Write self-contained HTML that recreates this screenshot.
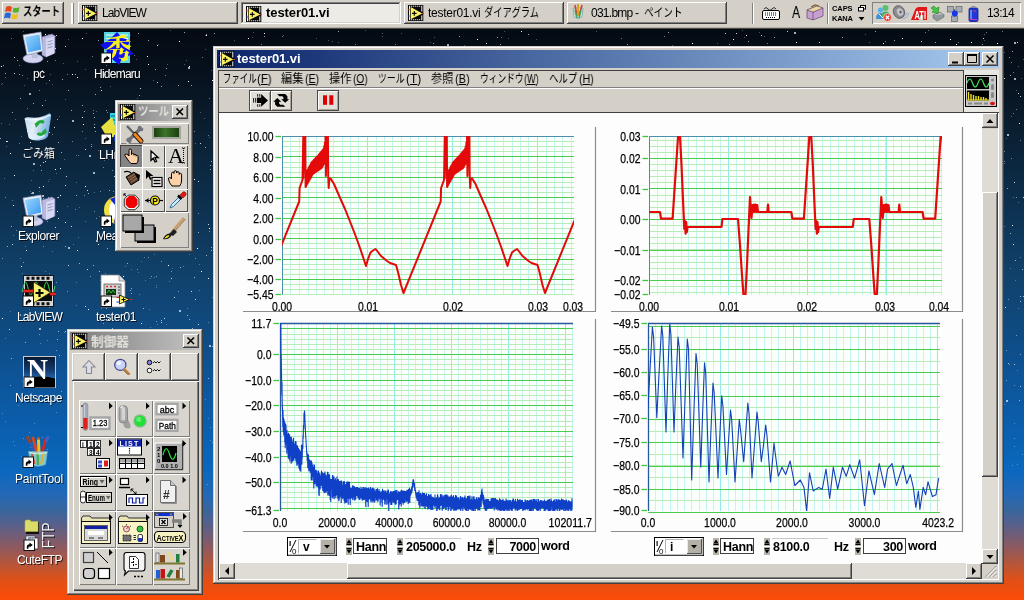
<!DOCTYPE html>
<html lang="ja"><head><meta charset="utf-8"><title>tester01.vi</title>
<style>
html,body{margin:0;padding:0}
body{width:1024px;height:600px;overflow:hidden;position:relative;font-family:"Liberation Sans","Noto Sans CJK JP",sans-serif;font-size:12px;color:#000;
background:linear-gradient(to bottom,#040a12 0px,#040a12 28px,#07121e 78px,#0a1e30 128px,#0c2a44 178px,#0e3658 228px,#10426c 278px,#0f4a80 328px,#0d5498 378px,#0b5fae 428px,#0a68be 470px,#2468b6 495px,#38669e 510px,#58608a 525px,#885a64 545px,#b85638 565px,#e05018 580px,#f84c08 596px);}
.a{position:absolute}
.t{position:absolute;white-space:nowrap;line-height:1}
.win{position:absolute;background:#d4d0c8;box-shadow:inset -1px -1px #404040,inset 1px 1px #d4d0c8,inset -2px -2px #808080,inset 2px 2px #fff}
.btn{position:absolute;background:#d4d0c8;box-shadow:inset -1px -1px #404040,inset 1px 1px #fff,inset -2px -2px #808080,inset 2px 2px #d4d0c8}
.sunk{position:absolute;box-shadow:inset -1px -1px #fff,inset 1px 1px #808080,inset -2px -2px #d4d0c8,inset 2px 2px #404040}
.lbl{position:absolute;white-space:nowrap;color:#fff;font-size:12px;line-height:12px;text-shadow:1px 1px 0 rgba(0,0,0,.75)}
svg{position:absolute;overflow:visible}
.t,.lbl,svg{will-change:transform}
</style></head><body>
<svg class="a" style="left:0;top:0" width="1024" height="600" shape-rendering="crispEdges"><path d="M34 423h1v1h-1zM205 49h1v1h-1zM68 39h1v1h-1zM25 313h1v1h-1zM984 40h1v1h-1zM23 201h1v1h-1zM64 159h1v1h-1zM22 381h1v1h-1zM10 311h1v1h-1zM1021 78h1v1h-1zM764 36h1v1h-1zM31 180h1v1h-1zM46 83h1v1h-1zM156 285h1v1h-1zM45 132h1v1h-1zM49 273h1v1h-1zM189 254h1v1h-1zM365 30h1v1h-1zM76 282h1v1h-1zM464 45h1v1h-1zM49 179h1v1h-1zM48 181h1v1h-1zM59 116h1v1h-1zM63 63h1v1h-1zM50 377h1v1h-1zM47 449h1v1h-1zM1014 423h1v1h-1zM1013 197h1v1h-1zM212 442h1v1h-1zM1004 404h1v1h-1zM39 155h1v1h-1zM14 445h1v1h-1zM96 111h1v1h-1zM48 34h1v1h-1zM419 39h1v1h-1zM29 432h1v1h-1zM401 33h1v1h-1zM744 37h1v1h-1zM47 340h1v1h-1zM1018 202h1v1h-1zM21 136h1v1h-1zM672 45h1v1h-1zM1004 52h1v1h-1zM30 191h1v1h-1zM5 77h1v1h-1zM65 99h1v1h-1zM170 30h1v1h-1zM30 447h1v1h-1zM28 54h1v1h-1zM1006 138h1v1h-1zM25 275h1v1h-1zM95 70h1v1h-1zM52 84h1v1h-1zM1009 364h1v1h-1zM50 74h1v1h-1zM154 277h1v1h-1zM207 484h1v1h-1zM137 98h1v1h-1zM76 305h1v1h-1zM150 327h1v1h-1zM2 83h1v1h-1zM52 251h1v1h-1zM23 31h1v1h-1zM104 160h1v1h-1zM153 80h1v1h-1zM24 85h1v1h-1zM199 264h1v1h-1zM1012 465h1v1h-1zM205 399h1v1h-1zM1023 59h1v1h-1zM332 41h1v1h-1zM101 308h1v1h-1zM120 50h1v1h-1zM29 309h1v1h-1zM187 308h1v1h-1zM154 254h1v1h-1zM2 413h1v1h-1zM183 266h1v1h-1zM434 37h1v1h-1zM54 149h1v1h-1zM204 118h1v1h-1zM15 119h1v1h-1zM338 42h1v1h-1zM252 37h1v1h-1zM210 427h1v1h-1zM508 38h1v1h-1zM20 258h1v1h-1zM25 385h1v1h-1zM13 441h1v1h-1zM865 34h1v1h-1zM86 33h1v1h-1zM100 280h1v1h-1zM1004 163h1v1h-1zM1011 116h1v1h-1zM79 207h1v1h-1zM984 34h1v1h-1zM1014 438h1v1h-1zM144 257h1v1h-1zM99 216h1v1h-1zM4 178h1v1h-1zM186 60h1v1h-1zM125 266h1v1h-1zM28 436h1v1h-1zM1020 257h1v1h-1zM195 143h1v1h-1zM157 324h1v1h-1zM209 137h1v1h-1zM158 44h1v1h-1zM501 37h1v1h-1zM13 235h1v1h-1zM73 244h1v1h-1zM328 40h1v1h-1zM1015 280h1v1h-1zM167 64h1v1h-1zM1014 385h1v1h-1zM23 438h1v1h-1zM85 138h1v1h-1zM536 39h1v1h-1zM78 237h1v1h-1zM22 273h1v1h-1zM208 418h1v1h-1zM12 200h1v1h-1zM40 343h1v1h-1zM77 61h1v1h-1zM42 437h1v1h-1zM39 191h1v1h-1zM199 290h1v1h-1zM33 476h1v1h-1zM25 246h1v1h-1zM1014 446h1v1h-1zM18 405h1v1h-1zM130 35h1v1h-1zM110 86h1v1h-1zM156 287h1v1h-1zM56 412h1v1h-1zM184 64h1v1h-1zM382 33h1v1h-1zM21 456h1v1h-1zM717 43h1v1h-1zM67 206h1v1h-1zM382 36h1v1h-1zM169 281h1v1h-1zM166 324h1v1h-1zM26 484h1v1h-1zM504 31h1v1h-1zM5 421h1v1h-1zM94 192h1v1h-1zM1 84h1v1h-1zM39 441h1v1h-1zM211 70h1v1h-1zM9 124h1v1h-1zM253 32h1v1h-1zM64 332h1v1h-1zM1016 90h1v1h-1zM210 440h1v1h-1zM108 159h1v1h-1zM234 40h1v1h-1zM149 309h1v1h-1zM869 42h1v1h-1zM1017 370h1v1h-1zM103 55h1v1h-1zM1022 454h1v1h-1zM139 294h1v1h-1zM1004 226h1v1h-1zM136 59h1v1h-1zM1017 464h1v1h-1zM200 112h1v1h-1zM85 221h1v1h-1zM150 278h1v1h-1zM212 297h1v1h-1zM208 322h1v1h-1zM430 42h1v1h-1zM45 213h1v1h-1zM141 261h1v1h-1zM1010 268h1v1h-1zM20 232h1v1h-1zM49 307h1v1h-1zM172 268h1v1h-1zM283 35h1v1h-1zM33 120h1v1h-1zM98 150h1v1h-1zM138 272h1v1h-1zM729 44h1v1h-1zM5 338h1v1h-1zM1018 66h1v1h-1zM76 182h1v1h-1zM76 155h1v1h-1zM145 280h1v1h-1zM45 271h1v1h-1zM205 35h1v1h-1zM759 32h1v1h-1zM28 238h1v1h-1zM105 273h1v1h-1zM27 78h1v1h-1zM6 146h1v1h-1zM33 170h1v1h-1zM85 69h1v1h-1zM123 321h1v1h-1zM1 123h1v1h-1zM596 31h1v1h-1zM742 30h1v1h-1zM33 465h1v1h-1zM35 312h1v1h-1zM1018 308h1v1h-1zM316 38h1v1h-1zM56 173h1v1h-1zM131 269h1v1h-1z" fill="#fff" opacity="0.3"/><path d="M129 57h1v1h-1zM61 391h1v1h-1zM123 51h1v1h-1zM171 271h1v1h-1zM101 137h1v1h-1zM22 75h1v1h-1zM55 36h1v1h-1zM124 34h1v1h-1zM19 65h1v1h-1zM621 38h1v1h-1zM37 151h1v1h-1zM928 30h1v1h-1zM151 276h1v1h-1zM112 170h1v1h-1zM261 44h1v1h-1zM1020 140h1v1h-1zM1008 299h1v1h-1zM94 211h1v1h-1zM198 213h1v1h-1zM93 110h1v1h-1zM148 257h1v1h-1zM47 221h1v1h-1zM106 65h1v1h-1zM56 235h1v1h-1zM30 37h1v1h-1zM36 35h1v1h-1zM72 141h1v1h-1zM23 262h1v1h-1zM55 60h1v1h-1zM22 235h1v1h-1zM2 258h1v1h-1zM1002 31h1v1h-1zM31 236h1v1h-1zM103 167h1v1h-1zM39 90h1v1h-1zM664 36h1v1h-1zM113 191h1v1h-1zM194 131h1v1h-1zM925 32h1v1h-1zM1006 380h1v1h-1zM208 135h1v1h-1zM39 334h1v1h-1zM56 350h1v1h-1zM75 209h1v1h-1zM16 230h1v1h-1zM56 282h1v1h-1zM53 380h1v1h-1zM156 276h1v1h-1zM82 131h1v1h-1zM31 314h1v1h-1zM42 70h1v1h-1zM1020 354h1v1h-1zM1013 113h1v1h-1zM52 134h1v1h-1zM282 36h1v1h-1zM1004 151h1v1h-1zM1016 197h1v1h-1zM134 55h1v1h-1zM137 269h1v1h-1zM78 155h1v1h-1zM209 231h1v1h-1zM1006 350h1v1h-1zM55 400h1v1h-1zM1013 72h1v1h-1zM107 112h1v1h-1zM28 315h1v1h-1zM355 44h1v1h-1zM885 41h1v1h-1zM11 38h1v1h-1zM156 321h1v1h-1zM91 144h1v1h-1zM47 40h1v1h-1zM114 140h1v1h-1zM1004 161h1v1h-1zM67 291h1v1h-1zM395 44h1v1h-1zM161 261h1v1h-1zM90 276h1v1h-1zM178 291h1v1h-1zM45 100h1v1h-1zM209 98h1v1h-1zM1016 335h1v1h-1zM1011 158h1v1h-1zM1011 62h1v1h-1zM1016 109h1v1h-1zM27 108h1v1h-1zM165 75h1v1h-1zM767 43h1v1h-1zM103 323h1v1h-1zM100 191h1v1h-1zM105 44h1v1h-1zM67 74h1v1h-1zM19 143h1v1h-1zM92 56h1v1h-1zM52 152h1v1h-1zM1023 197h1v1h-1zM202 57h1v1h-1zM43 246h1v1h-1zM33 46h1v1h-1zM195 258h1v1h-1zM10 385h1v1h-1zM958 42h1v1h-1zM96 218h1v1h-1zM986 32h1v1h-1zM84 195h1v1h-1zM5 197h1v1h-1zM729 44h1v1h-1z" fill="#fff" opacity="0.45"/><path d="M107 248h1v1h-1zM528 34h1v1h-1zM497 37h1v1h-1zM1023 296h1v1h-1zM71 110h1v1h-1zM894 40h1v1h-1zM198 232h1v1h-1zM36 74h1v1h-1zM206 34h1v1h-1zM748 41h1v1h-1zM130 290h1v1h-1zM33 103h1v1h-1zM627 44h1v1h-1zM131 288h1v1h-1zM210 165h1v1h-1zM1009 57h1v1h-1zM148 40h1v1h-1zM161 320h1v1h-1zM82 105h1v1h-1zM109 190h1v1h-1zM49 380h1v1h-1zM20 98h1v1h-1zM113 128h1v1h-1zM774 37h1v1h-1zM25 342h1v1h-1zM49 80h1v1h-1zM180 267h1v1h-1zM214 33h1v1h-1zM1010 233h1v1h-1zM139 95h1v1h-1zM100 87h1v1h-1zM161 86h1v1h-1zM1020 296h1v1h-1zM1020 301h1v1h-1zM44 157h1v1h-1zM49 280h1v1h-1zM54 373h1v1h-1zM57 339h1v1h-1zM65 331h1v1h-1zM57 197h1v1h-1zM68 90h1v1h-1zM58 142h1v1h-1zM95 94h1v1h-1zM57 119h1v1h-1zM61 152h1v1h-1zM131 293h1v1h-1zM91 146h1v1h-1zM982 44h1v1h-1zM935 42h1v1h-1zM1010 75h1v1h-1zM94 124h1v1h-1zM98 40h1v1h-1zM95 131h1v1h-1zM31 193h1v1h-1zM178 85h1v1h-1zM187 315h1v1h-1zM1012 51h1v1h-1zM88 193h1v1h-1zM189 319h1v1h-1zM1022 269h1v1h-1zM29 197h1v1h-1zM58 331h1v1h-1zM1007 188h1v1h-1zM211 250h1v1h-1zM155 69h1v1h-1zM75 74h1v1h-1zM11 226h1v1h-1zM1019 400h1v1h-1zM127 263h1v1h-1zM106 308h1v1h-1zM459 36h1v1h-1zM433 43h1v1h-1zM692 43h1v1h-1zM35 56h1v1h-1zM668 32h1v1h-1zM191 85h1v1h-1zM59 355h1v1h-1zM206 35h1v1h-1zM194 277h1v1h-1zM35 311h1v1h-1zM875 31h1v1h-1zM102 291h1v1h-1zM842 37h1v1h-1zM205 147h1v1h-1zM93 113h1v1h-1zM166 68h1v1h-1zM93 265h1v1h-1zM40 165h1v1h-1zM112 328h1v1h-1zM1015 260h1v1h-1zM0 138h1v1h-1zM48 197h1v1h-1zM5 73h1v1h-1zM106 110h1v1h-1zM19 74h1v1h-1zM79 263h1v1h-1zM60 168h1v1h-1zM94 117h1v1h-1zM11 358h1v1h-1zM33 133h1v1h-1zM17 60h1v1h-1zM76 195h1v1h-1zM264 36h1v1h-1zM208 378h1v1h-1zM26 235h1v1h-1zM212 346h1v1h-1zM1014 364h1v1h-1zM110 46h1v1h-1zM211 247h1v1h-1zM338 31h1v1h-1zM47 61h1v1h-1zM1008 363h1v1h-1zM40 358h1v1h-1zM65 246h1v1h-1zM3 65h1v1h-1zM206 255h1v1h-1zM7 246h1v1h-1zM12 112h1v1h-1zM102 294h1v1h-1zM44 305h1v1h-1zM111 71h1v1h-1zM138 33h1v1h-1zM211 161h1v1h-1zM43 198h1v1h-1zM38 313h1v1h-1zM106 50h1v1h-1zM192 328h1v1h-1zM210 169h1v1h-1zM99 271h1v1h-1zM41 170h1v1h-1zM1020 386h1v1h-1zM500 44h1v1h-1zM184 32h1v1h-1zM139 71h1v1h-1zM84 111h1v1h-1zM27 212h1v1h-1zM62 79h1v1h-1zM1023 197h1v1h-1zM143 308h1v1h-1z" fill="#fff" opacity="0.6"/><path d="M85 306h1v1h-1zM206 35h1v1h-1zM140 88h1v1h-1zM195 299h1v1h-1zM198 181h1v1h-1zM1020 96h1v1h-1zM787 31h1v1h-1zM7 141h1v1h-1zM87 269h1v1h-1zM117 60h1v1h-1zM58 218h1v1h-1zM66 176h1v1h-1zM114 176h1v1h-1zM208 224h1v1h-1zM49 132h1v1h-1zM198 324h1v1h-1zM114 285h1v1h-1zM1014 182h1v1h-1zM114 300h1v1h-1zM14 57h1v1h-1zM171 278h1v1h-1zM30 142h1v1h-1zM85 149h1v1h-1zM486 43h1v1h-1zM58 197h1v1h-1zM157 45h1v1h-1zM9 329h1v1h-1zM102 228h1v1h-1zM109 211h1v1h-1zM65 185h1v1h-1zM725 33h1v1h-1zM1013 244h1v1h-1zM736 33h1v1h-1zM921 41h1v1h-1zM174 297h1v1h-1zM12 244h1v1h-1zM161 322h1v1h-1zM761 35h1v1h-1zM983 38h1v1h-1zM123 70h1v1h-1zM87 190h1v1h-1zM71 226h1v1h-1zM819 42h1v1h-1zM45 161h1v1h-1zM26 250h1v1h-1zM77 250h1v1h-1zM1005 307h1v1h-1zM35 155h1v1h-1zM60 168h1v1h-1zM39 187h1v1h-1zM164 318h1v1h-1zM43 162h1v1h-1zM54 127h1v1h-1zM191 291h1v1h-1zM68 265h1v1h-1zM56 35h1v1h-1zM141 323h1v1h-1zM42 105h1v1h-1zM157 82h1v1h-1zM14 73h1v1h-1zM55 227h1v1h-1zM1004 78h1v1h-1zM52 35h1v1h-1zM200 143h1v1h-1zM101 90h1v1h-1zM1017 42h1v1h-1zM65 46h1v1h-1zM1018 93h1v1h-1z" fill="#fff" opacity="0.8"/><path d="M212 80h1v1h-1zM148 64h1v1h-1zM13 205h1v1h-1zM1019 123h1v1h-1zM49 47h1v1h-1zM1012 225h1v1h-1zM77 77h1v1h-1zM201 271h1v1h-1zM6 141h1v1h-1zM65 222h1v1h-1zM746 35h1v1h-1zM45 34h1v1h-1zM194 179h1v1h-1zM733 39h1v1h-1zM997 43h1v1h-1zM189 66h1v1h-1zM85 186h1v1h-1zM209 228h1v1h-1zM72 74h1v1h-1zM45 132h1v1h-1zM98 244h1v1h-1zM197 248h1v1h-1zM60 195h1v1h-1zM168 265h1v1h-1zM477 39h1v1h-1zM796 42h1v1h-1zM179 41h1v1h-1zM14 175h1v1h-1zM1 66h1v1h-1zM82 38h1v1h-1zM10 153h1v1h-1zM902 38h1v1h-1zM883 43h1v1h-1zM82 117h1v1h-1zM94 127h1v1h-1zM248 38h1v1h-1zM21 266h1v1h-1zM55 48h1v1h-1zM27 131h1v1h-1zM83 124h1v1h-1zM108 319h1v1h-1zM521 31h1v1h-1zM43 186h1v1h-1zM123 276h1v1h-1zM61 313h1v1h-1zM51 54h1v1h-1zM2 318h1v1h-1zM264 33h1v1h-1zM55 169h1v1h-1zM971 42h1v1h-1zM147 56h1v1h-1zM188 81h1v1h-1zM956 44h1v1h-1zM105 74h1v1h-1zM950 39h1v1h-1zM57 211h1v1h-1zM208 278h1v1h-1zM88 309h1v1h-1zM692 43h1v1h-1z" fill="#fff" opacity="1.0"/><path d="M39 328h2v2h-2zM32 192h2v2h-2zM72 120h2v2h-2zM209 345h2v2h-2zM188 67h2v2h-2zM1007 134h2v2h-2zM42 195h2v2h-2zM794 32h2v2h-2zM1006 400h2v2h-2zM1014 42h2v2h-2zM29 93h2v2h-2zM1014 78h2v2h-2zM447 44h2v2h-2zM93 172h2v2h-2zM89 155h2v2h-2zM179 310h2v2h-2zM68 247h2v2h-2zM33 163h2v2h-2zM96 240h2v2h-2zM19 314h2v2h-2z" fill="#e8f0ff" opacity="0.700"/></svg>
<svg class="a" style="left:22px;top:32px" width="34" height="32" viewBox="0 0 34 32"><defs><linearGradient id="scr54" x1="0" y1="0" x2="1" y2="1"><stop offset="0" stop-color="#98d8ff"/><stop offset="1" stop-color="#3c98f0"/></linearGradient></defs><path d="M20 5l10-3 3 2v17l-9 4-4-2z" fill="#b8b8e0" stroke="#8080b0" stroke-width="0.6"/><path d="M24 7l8-2.5v17L24 25z" fill="#d8d8f4"/><path d="M25.5 10l5-1.5M25.5 13l5-1.5M25.5 16l5-1.5" stroke="#9098b8" stroke-width="1"/><ellipse cx="11" cy="26.5" rx="10" ry="4.5" fill="#d4d4f0" stroke="#9090c0" stroke-width="0.6"/><path d="M10 19h5l1 7h-6z" fill="#b8c0dc"/><path d="M1 3l18-3 2 19-16 4z" fill="#e8ecf8" stroke="#98a0c0" stroke-width="0.7"/><path d="M3 5l14.5-2.6 1.7 15L6.4 20.6z" fill="url(#scr54)"/></svg>
<div class="lbl" style="left:32.75px;top:68px;font-size:12px;letter-spacing:-0.59px;">pc</div>
<svg class="a" style="left:100px;top:32px" width="34" height="32" viewBox="0 0 34 32"><rect x="4" y="0" width="26" height="31" fill="#58d4e0"/><path d="M6 3h22M6 6.500h22M6 10h22M6 13.500h22M6 17h22M6 20.500h22M6 24h22M6 27.500h22" stroke="#e8fcff" stroke-width="1.200"/><path d="M0 13L9 8l8-8 5 6 8 2-3 8 7 6-12 4-3 7-7-6-8 1 3-9z" fill="#1010f0"/><text x="4" y="27" font-family='"Liberation Serif","Noto Serif CJK SC",serif' font-weight="bold" font-size="28" fill="#f8f020">秀</text></svg><svg class="a" style="left:101px;top:53px" width="11" height="11" viewBox="0 0 11 11"><rect x="0" y="0" width="10.500" height="10.500" fill="#fff" stroke="#101010" stroke-width="1"/><path d="M2.800 8.800V6.800Q2.800 4.300 5.500 4.300V2.500L8.700 5 5.500 7.500V5.900Q4.400 5.900 4.300 8.800z" fill="#000"/></svg>
<div class="lbl" style="left:94.0px;top:68px;font-size:12px;letter-spacing:-0.75px;">Hidemaru</div>
<svg class="a" style="left:23px;top:113px" width="30" height="30" viewBox="0 0 30 30"><defs><linearGradient id="tr" x1="0" y1="0" x2="1" y2="0.300"><stop offset="0" stop-color="#c4e0f8"/><stop offset="0.450" stop-color="#eef8ff"/><stop offset="1" stop-color="#78b4e8"/></linearGradient></defs><path d="M1.500 5.500Q3 3.500 8 4.500 18 5.500 26 0.500 28.500 0 28 4L25 23Q23.500 26.500 16 27.500 8 28 5.500 24.500z" fill="url(#tr)" opacity="0.960"/><path d="M2 6Q14 9 27.500 2" fill="none" stroke="#f8fcff" stroke-width="1.200" opacity="0.900"/><ellipse cx="14" cy="23.500" rx="8" ry="2.800" fill="#e8f4ff" opacity="0.700" transform="rotate(-8 14 23.500)"/><path d="M21 9.500a5 5 0 0 0-7.500 2.500" fill="none" stroke="#20a838" stroke-width="3"/><path d="M11.500 10l5 1-3.500 3.800z" fill="#20a838"/><path d="M14.500 20.500a5 5 0 0 0 7.500-2.500" fill="none" stroke="#20a838" stroke-width="3"/><path d="M24 20l-5-1 3.500-3.800z" fill="#20a838"/></svg>
<div class="lbl" style="left:22.0px;top:148px;font-size:12px;transform:scaleX(0.916);transform-origin:0 0;">ごみ箱</div>
<svg class="a" style="left:100px;top:113px" width="34" height="32" viewBox="0 0 34 32"><rect x="10" y="0" width="24" height="22" fill="#30d0e0"/><path d="M11 3h22M11 7h22M11 11h22M11 15h22M11 19h22" stroke="#106080" stroke-width="1"/><path d="M1 14L12 4l6 18-10 4z" fill="#e8e040"/><path d="M14 22h20v6H14z" fill="#1030c0"/></svg><svg class="a" style="left:101px;top:134px" width="11" height="11" viewBox="0 0 11 11"><rect x="0" y="0" width="10.500" height="10.500" fill="#fff" stroke="#101010" stroke-width="1"/><path d="M2.800 8.800V6.800Q2.800 4.300 5.500 4.300V2.500L8.700 5 5.500 7.500V5.900Q4.400 5.900 4.300 8.800z" fill="#000"/></svg>
<div class="lbl" style="left:99px;top:149px;font-size:12px;letter-spacing:-0.34px;">LHmelt</div>
<svg class="a" style="left:22px;top:195px" width="34" height="32" viewBox="0 0 34 32"><defs><linearGradient id="scr217" x1="0" y1="0" x2="1" y2="1"><stop offset="0" stop-color="#98d8ff"/><stop offset="1" stop-color="#3c98f0"/></linearGradient></defs><path d="M20 5l10-3 3 2v17l-9 4-4-2z" fill="#b8b8e0" stroke="#8080b0" stroke-width="0.6"/><path d="M24 7l8-2.5v17L24 25z" fill="#d8d8f4"/><path d="M25.5 10l5-1.5M25.5 13l5-1.5M25.5 16l5-1.5" stroke="#9098b8" stroke-width="1"/><ellipse cx="11" cy="26.5" rx="10" ry="4.5" fill="#d4d4f0" stroke="#9090c0" stroke-width="0.6"/><path d="M10 19h5l1 7h-6z" fill="#b8c0dc"/><path d="M1 3l18-3 2 19-16 4z" fill="#e8ecf8" stroke="#98a0c0" stroke-width="0.7"/><path d="M3 5l14.5-2.6 1.7 15L6.4 20.6z" fill="url(#scr217)"/></svg><svg class="a" style="left:23px;top:216px" width="11" height="11" viewBox="0 0 11 11"><rect x="0" y="0" width="10.500" height="10.500" fill="#fff" stroke="#101010" stroke-width="1"/><path d="M2.800 8.800V6.800Q2.800 4.300 5.500 4.300V2.500L8.700 5 5.500 7.500V5.900Q4.400 5.900 4.300 8.800z" fill="#000"/></svg>
<div class="lbl" style="left:18.0px;top:230px;font-size:12px;letter-spacing:-0.46px;">Explorer</div>
<svg class="a" style="left:100px;top:195px" width="34" height="32" viewBox="0 0 34 32"><circle cx="18" cy="15" r="14" fill="#f0e040"/><circle cx="21" cy="15" r="12" fill="#fff"/><path d="M10 4Q22 -2 32 8L20 16z" fill="#1828c8"/><path d="M16 16l14 8Q24 31 14 28z" fill="#1828c8"/></svg><svg class="a" style="left:101px;top:216px" width="11" height="11" viewBox="0 0 11 11"><rect x="0" y="0" width="10.500" height="10.500" fill="#fff" stroke="#101010" stroke-width="1"/><path d="M2.800 8.800V6.800Q2.800 4.300 5.500 4.300V2.500L8.700 5 5.500 7.500V5.900Q4.400 5.900 4.300 8.800z" fill="#000"/></svg>
<div class="lbl" style="left:96px;top:230px;font-size:12px;letter-spacing:-0.56px;">Meadow</div>
<svg class="a" style="left:21px;top:275px" width="36" height="32" viewBox="0 0 36 32"><rect x="2.500" y="0.500" width="30" height="31" fill="#d4d4d4" stroke="#181818" stroke-width="1"/><rect x="4" y="6" width="27" height="20" fill="#0c0c0c"/><path d="M5.5 1.800h3v3h-3zM5.5 27.200h3v3h-3zM10.5 1.800h3v3h-3zM10.5 27.200h3v3h-3zM15.5 1.800h3v3h-3zM15.5 27.200h3v3h-3zM20.5 1.800h3v3h-3zM20.5 27.200h3v3h-3zM25.5 1.800h3v3h-3zM25.5 27.200h3v3h-3z" fill="#0c0c0c"/><path d="M1.0 16.8 L1.5 14.9 L2.0 13.0 L2.5 11.1 L3.0 9.4 L3.5 8.1 L4.0 7.3 L4.5 7.0 L5.0 7.3 L5.5 8.1 L6.0 9.4 L6.5 11.1 L7.0 13.0 L7.5 14.9 L8.0 16.8 L8.5 18.3 L9.0 19.4 L9.5 19.9 L10.0 19.9 L10.5 19.4 L11.0 18.3 L11.5 16.8 L12.0 14.9 L12.5 13.0 L13.0 11.1 L13.5 9.4 L14.0 8.1 L14.5 7.3 L15.0 7.0 L15.5 7.3 L16.0 8.1 L16.5 9.4 L17.0 11.1 L17.5 13.0 L18.0 14.9 L18.5 16.7 L19.0 18.3 L19.5 19.4 L20.0 19.9 L20.5 19.9 L21.0 19.4 L21.5 18.3 L22.0 16.8 L22.5 14.9 L23.0 13.0 L23.5 11.1 L24.0 9.4 L24.5 8.1 L25.0 7.3 L25.5 7.0 L26.0 7.3 L26.5 8.1 L27.0 9.4 L27.5 11.1 L28.0 13.0 L28.5 14.9 L29.0 16.7 L29.5 18.3 L30.0 19.4 L30.5 19.9 L31.0 19.9 L31.5 19.4 L32.0 18.3 L32.5 16.8 L33.0 14.9 L33.5 13.0 L34.0 11.1" fill="none" stroke="#38d858" stroke-width="1"/><path d="M2 16h10M29 19h6" stroke="#701010" stroke-width="3.400"/><path d="M2 16h10M29 19h6" stroke="#e82020" stroke-width="2"/><path d="M12.500 7L29.500 17.500 12.500 28z" fill="#f8f070" stroke="#202000" stroke-width="0.800"/><path d="M14.500 18h8M18.500 14v8" stroke="#000" stroke-width="2.200"/></svg><svg class="a" style="left:23px;top:296px" width="11" height="11" viewBox="0 0 11 11"><rect x="0" y="0" width="10.500" height="10.500" fill="#fff" stroke="#101010" stroke-width="1"/><path d="M2.800 8.800V6.800Q2.800 4.300 5.500 4.300V2.500L8.700 5 5.500 7.500V5.900Q4.400 5.900 4.300 8.800z" fill="#000"/></svg>
<div class="lbl" style="left:17.0px;top:311px;font-size:12px;letter-spacing:-0.81px;">LabVIEW</div>
<svg class="a" style="left:100px;top:275px" width="34" height="32" viewBox="0 0 34 32"><path d="M1 0h18l6 6v26H1z" fill="#fff" stroke="#888" stroke-width="0.8"/><path d="M19 0v6h6" fill="#ddd" stroke="#888" stroke-width="0.8"/><rect x="4" y="9" width="17" height="13" fill="#d0d0d0" stroke="#555" stroke-width="0.8"/><rect x="6" y="14" width="10" height="6" fill="#103010"/><path d="M7 18l2-3 2 3 2-3 2 3" stroke="#30e050" fill="none" stroke-width="0.8"/><path d="M6 11.5h2M10 11.5h2M14 11.5h2" stroke="#e03030" stroke-width="1.5"/><path d="M18 12h2M18 15h2M18 18h2" stroke="#444" stroke-width="1.2"/><path d="M19.500 20l10 4.500-10 4.500z" fill="#f4ec58" stroke="#000" stroke-width="0.800"/><path d="M21.500 24.500h4M23.500 22.500v4" stroke="#000" stroke-width="1"/><path d="M29.500 24.500h3M16.500 22.500h3" stroke="#e02020" stroke-width="1"/><path d="M16.500 27h3" stroke="#2030d0" stroke-width="1"/></svg><svg class="a" style="left:101px;top:296px" width="11" height="11" viewBox="0 0 11 11"><rect x="0" y="0" width="10.500" height="10.500" fill="#fff" stroke="#101010" stroke-width="1"/><path d="M2.800 8.800V6.800Q2.800 4.300 5.500 4.300V2.500L8.700 5 5.500 7.500V5.900Q4.400 5.900 4.300 8.800z" fill="#000"/></svg>
<div class="lbl" style="left:96.0px;top:311px;font-size:12px;letter-spacing:-0.42px;">tester01</div>
<svg class="a" style="left:23px;top:356px" width="33" height="32" viewBox="0 0 33 32"><defs><linearGradient id="ns" x1="0" y1="0" x2="0" y2="1"><stop offset="0" stop-color="#081830"/><stop offset="0.450" stop-color="#143c70"/><stop offset="0.700" stop-color="#2464a8"/><stop offset="1" stop-color="#4890d8"/></linearGradient></defs><rect x="0.5" y="0.5" width="32" height="31" fill="url(#ns)" stroke="#c8c8c8" stroke-width="1"/><path d="M1 31.500V24.500Q16 17.500 32 22.500v9z" fill="#000"/><text x="4" y="23" font-family='"Liberation Serif",serif' font-weight="bold" font-size="29" fill="#fff">N</text></svg><svg class="a" style="left:24px;top:377px" width="11" height="11" viewBox="0 0 11 11"><rect x="0" y="0" width="10.500" height="10.500" fill="#fff" stroke="#101010" stroke-width="1"/><path d="M2.800 8.800V6.800Q2.800 4.300 5.500 4.300V2.500L8.700 5 5.500 7.500V5.900Q4.400 5.900 4.300 8.800z" fill="#000"/></svg>
<div class="lbl" style="left:15.0px;top:392px;font-size:12px;letter-spacing:-0.46px;">Netscape</div>
<svg class="a" style="left:24px;top:436px" width="30" height="32" viewBox="0 0 30 32"><path d="M5 3l6 14" stroke="#3058c0" stroke-width="2.600" stroke-linecap="round"/><path d="M3.500 1.500l2 4" stroke="#a04020" stroke-width="3" stroke-linecap="round"/><path d="M9 2l4 15" stroke="#d84818" stroke-width="2.800" stroke-linecap="round"/><path d="M14.500 4l.5 13" stroke="#f0c020" stroke-width="3" stroke-linecap="round"/><path d="M14.500 1v3" stroke="#d06010" stroke-width="2"/><path d="M22 3l-4 14" stroke="#d02828" stroke-width="2.800" stroke-linecap="round"/><path d="M24 1l-1.500 4" stroke="#4060c0" stroke-width="3" stroke-linecap="round"/><path d="M4.500 15.500h19l-2 13q-7.500 3.500-15 0z" fill="#a8e4d0" opacity="0.780" stroke="#88c0c0" stroke-width="0.600"/><path d="M8 18l2.500 10" stroke="#e04030" stroke-width="2.200" opacity="0.850"/><path d="M13.500 17l.5 12" stroke="#40a848" stroke-width="2.400" opacity="0.850"/><path d="M19.500 18l-2.500 10" stroke="#e8b020" stroke-width="2.200" opacity="0.850"/><path d="M5 16.500q9 3 18 0" stroke="#e8fff8" stroke-width="1" fill="none" opacity="0.800"/></svg><svg class="a" style="left:23px;top:457px" width="11" height="11" viewBox="0 0 11 11"><rect x="0" y="0" width="10.500" height="10.500" fill="#fff" stroke="#101010" stroke-width="1"/><path d="M2.800 8.800V6.800Q2.800 4.300 5.500 4.300V2.500L8.700 5 5.500 7.500V5.900Q4.400 5.900 4.300 8.800z" fill="#000"/></svg>
<div class="lbl" style="left:15.0px;top:473px;font-size:12px;letter-spacing:-0.15px;">PaintTool</div>
<svg class="a" style="left:22px;top:519px" width="34" height="32" viewBox="0 0 34 32"><path d="M4 3h13v12H4z" fill="#101010"/><path d="M3 2.500l1-1.500h4l1 1.500h7v10H3z" fill="#dcdc68" stroke="#b8b848" stroke-width="0.500"/><rect x="4" y="17" width="9" height="11" fill="#f0f0f0" stroke="#444" stroke-width="0.600"/><rect x="7" y="19" width="9" height="11" fill="#fcfcfc" stroke="#222" stroke-width="0.700"/><path d="M6 19h5" stroke="#5070c0" stroke-width="1" stroke-dasharray="1 1"/><text transform="translate(32.500,30.500) rotate(-90)" font-family='"Liberation Sans",sans-serif' font-size="17" fill="#080808" textLength="26" lengthAdjust="spacingAndGlyphs">FTP</text><text transform="translate(31.500,29.500) rotate(-90)" font-family='"Liberation Sans",sans-serif' font-size="17" fill="#f4f4f4" textLength="26" lengthAdjust="spacingAndGlyphs">FTP</text></svg><svg class="a" style="left:24px;top:540px" width="11" height="11" viewBox="0 0 11 11"><rect x="0" y="0" width="10.500" height="10.500" fill="#fff" stroke="#101010" stroke-width="1"/><path d="M2.800 8.800V6.800Q2.800 4.300 5.500 4.300V2.500L8.700 5 5.500 7.500V5.900Q4.400 5.900 4.300 8.800z" fill="#000"/></svg>
<div class="lbl" style="left:17.0px;top:554px;font-size:12px;letter-spacing:-0.43px;">CuteFTP</div>
<div class="a" style="left:0px;top:0px;width:1024px;height:28px;background:#d4d0c8;box-shadow:inset 0 -1px #b4b0a8"></div>
<div class="a" style="left:0px;top:28px;width:1024px;height:1px;background:#4c4a46"></div>
<div class="btn" style="left:2px;top:2px;width:62px;height:22px;"></div>
<svg class="a" style="left:5px;top:4px" width="17" height="17" viewBox="0 0 17 17"><path d="M1 3q3-2 6 0l-1 5q-3-1.5-6 0z" fill="#e84820"/><path d="M8.5 3.4q3 1.5 6-.4l-1 5q-3 1.5-6 0z" fill="#58b030"/><path d="M0 9.5q3-2 6 0l-1 5q-3-1.5-6 0z" fill="#2868d8"/><path d="M7 10q3 1.500 6-.4l-1 5q-3 1.500-6 0z" fill="#f0c020"/></svg>
<div class="t" style="left:23px;top:6px;font-size:12px;transform:scaleX(0.771);transform-origin:0 0;font-weight:bold">スタート</div>
<div class="a" style="left:71px;top:3px;width:2px;height:21px;background:#fff"></div><div class="a" style="left:73px;top:3px;width:1px;height:21px;background:#808080"></div>
<div class="btn" style="left:78px;top:2px;width:160px;height:22px;"></div>
<svg class="a" style="left:82px;top:5px" width="16" height="16" viewBox="0 0 16 16"><rect x="0" y="0" width="15.300" height="16" fill="#080808"/><path d="M1.500 0.800v14.400M13.800 0.800v5.800M13.800 10.400v4.800" stroke="#f4f4f4" stroke-width="1"/><path d="M2.800 1.200h10.500M2.800 14.800h10.500" stroke="#f4f4f4" stroke-width="1.100" stroke-dasharray="1.100 0.900"/><path d="M2.700 2L14.300 8.500 2.700 14.200z" fill="#f8f264"/><path d="M4 8.400h4.600M6.300 6.100v4.600" stroke="#000" stroke-width="1.100"/><path d="M0 4.700h1.800M13.800 8.500h2.200" stroke="#e02828" stroke-width="1.100"/><path d="M0 11h1.800" stroke="#2030d8" stroke-width="1.100"/></svg>
<div class="t" style="left:102px;top:7px;font-size:12px;letter-spacing:-0.96px;">LabVIEW</div>
<div class="sunk" style="left:241px;top:2px;width:160px;height:22px;background:#ecebe6"></div>
<svg class="a" style="left:246px;top:6px" width="16" height="16" viewBox="0 0 16 16"><rect x="0" y="0" width="15.300" height="16" fill="#080808"/><path d="M1.500 0.800v14.400M13.800 0.800v5.800M13.800 10.400v4.800" stroke="#f4f4f4" stroke-width="1"/><path d="M2.800 1.200h10.500M2.800 14.800h10.500" stroke="#f4f4f4" stroke-width="1.100" stroke-dasharray="1.100 0.900"/><path d="M2.700 2L14.300 8.500 2.700 14.200z" fill="#f8f264"/><path d="M4 8.400h4.600M6.300 6.100v4.600" stroke="#000" stroke-width="1.100"/><path d="M0 4.700h1.800M13.800 8.500h2.200" stroke="#e02828" stroke-width="1.100"/><path d="M0 11h1.800" stroke="#2030d8" stroke-width="1.100"/></svg>
<div class="t" style="left:266px;top:6px;font-size:13px;letter-spacing:-0.08px;font-weight:bold">tester01.vi</div>
<div class="btn" style="left:404px;top:2px;width:160px;height:22px;"></div>
<svg class="a" style="left:408px;top:5px" width="16" height="16" viewBox="0 0 16 16"><rect x="0" y="0" width="15.300" height="16" fill="#080808"/><path d="M1.500 0.800v14.400M13.800 0.800v5.800M13.800 10.400v4.800" stroke="#f4f4f4" stroke-width="1"/><path d="M2.800 1.200h10.500M2.800 14.800h10.500" stroke="#f4f4f4" stroke-width="1.100" stroke-dasharray="1.100 0.900"/><path d="M2.700 2L14.300 8.500 2.700 14.200z" fill="#f8f264"/><path d="M4 8.400h4.600M6.300 6.100v4.600" stroke="#000" stroke-width="1.100"/><path d="M0 4.700h1.800M13.800 8.500h2.200" stroke="#e02828" stroke-width="1.100"/><path d="M0 11h1.800" stroke="#2030d8" stroke-width="1.100"/></svg>
<div class="t" style="left:428px;top:7px;font-size:12px;letter-spacing:-0.26px;">tester01.vi</div>
<div class="t" style="left:484px;top:7px;font-size:12px;transform:scaleX(0.774);transform-origin:0 0;">ダイアグラム</div>
<div class="btn" style="left:567px;top:2px;width:160px;height:22px;"></div>
<svg class="a" style="left:572px;top:4px" width="12" height="17" viewBox="0 0 12 17"><path d="M1 4l1 9q4 3 8 0l1-9z" fill="#c8e8d8" stroke="#7090a0" stroke-width="0.6"/><path d="M3 1l2 11M6 0v12M10 1l-3 11" stroke="#d84020" stroke-width="1.6"/><path d="M6 0v12" stroke="#e8b020" stroke-width="1.6"/><path d="M3 6l2 8M9 6l-2 8" stroke="#40a060" stroke-width="1.5"/></svg>
<div class="t" style="left:590.5px;top:7px;font-size:12px;letter-spacing:-0.74px;">031.bmp</div>
<div class="t" style="left:635px;top:7px;font-size:12px;">-</div>
<div class="t" style="left:643.5px;top:7px;font-size:12px;transform:scaleX(0.802);transform-origin:0 0;">ペイント</div>
<div class="a" style="left:752px;top:3px;width:1px;height:21px;background:#808080"></div>
<div class="a" style="left:753px;top:3px;width:1px;height:21px;background:#fff"></div>
<svg class="a" style="left:762px;top:6px" width="18" height="14" viewBox="0 0 18 14"><path d="M2 3q2-3 4 0t4 0 4 0" fill="none" stroke="#000" stroke-width="0.8"/><rect x="0.5" y="4.500" width="17" height="9" rx="1.500" fill="#fff" stroke="#000"/><path d="M3 7h12M3 9h12M4 11.500h10" stroke="#000" stroke-width="1" stroke-dasharray="1 1"/></svg>
<div class="t" style="left:791.5px;top:4px;font-size:17px;transform:scaleX(0.72);transform-origin:0 0;font-weight:normal">A</div>
<svg class="a" style="left:806px;top:4px" width="18" height="16" viewBox="0 0 18 16"><path d="M1 6l10-4 6 2v8l-10 4-6-2z" fill="#c8a0d0" stroke="#604070" stroke-width="0.7"/><path d="M1 6l6 2 10-4M7 8v8" stroke="#604070" stroke-width="0.7" fill="none"/><path d="M5 3l4-2 4 1" stroke="#806020" fill="none" stroke-width="1.2"/><path d="M1 6l6 2 10-4-6-2z" fill="#e8d8a0" stroke="#604070" stroke-width="0.5"/></svg>
<div class="a" style="left:827px;top:3px;width:1px;height:21px;background:#808080"></div>
<div class="a" style="left:828px;top:3px;width:1px;height:21px;background:#fff"></div>
<div class="t" style="left:832px;top:5px;font-size:7.5px;letter-spacing:-0.09px;font-weight:bold">CAPS</div>
<div class="t" style="left:832px;top:15px;font-size:7.5px;letter-spacing:-0.29px;font-weight:bold">KANA</div>
<svg class="a" style="left:857px;top:4px" width="10" height="20" viewBox="0 0 10 20"><rect x="3.500" y="1.500" width="5" height="3.500" fill="#fff" stroke="#000"/><rect x="1.500" y="3.500" width="5" height="3.500" fill="#fff" stroke="#000"/><path d="M1.500 13h6l-3 3.500z" fill="#000"/></svg>
<div class="a" style="left:872px;top:2px;width:149px;height:22px;box-shadow:inset 1px 1px #808080,inset -1px -1px #fff"></div>
<svg class="a" style="left:876px;top:4px" width="110" height="18" viewBox="0 0 110 18"><circle cx="4.500" cy="6" r="2.600" fill="#58b0e8"/><circle cx="9.500" cy="4" r="3" fill="#58c070"/><path d="M0 15q0-6 4.500-6t4.500 6z" fill="#4090d8"/><path d="M5 14q0-7 5-6.500t4 6.500z" fill="#48b060"/><path d="M3 10l4 4" stroke="#e8f4ff" stroke-width="1"/><circle cx="11.500" cy="13.500" r="4" fill="#e83828" stroke="#fff" stroke-width="0.600"/><path d="M9.800 11.800l3.400 3.400M13.200 11.800l-3.400 3.400" stroke="#fff" stroke-width="1.300"/><ellipse cx="23" cy="8" rx="5.500" ry="6.500" transform="rotate(-25 23 8)" fill="#8c8c90" stroke="#58585c" stroke-width="0.800"/><ellipse cx="24" cy="8" rx="3" ry="3.800" transform="rotate(-25 24 8)" fill="#c8c8cc"/><ellipse cx="24.500" cy="8" rx="1.200" ry="1.600" fill="#606064"/><path d="M28 12q3-1 3.500-4M27 15q5-1 6-6" stroke="#98a8d8" fill="none" stroke-width="1"/><path d="M35 16l4-10q1-3 4-3h8v13h-4l.3-5h-2.800l-1.500 5z" fill="#e01818"/><text x="38.500" y="14.500" font-family="Liberation Sans,sans-serif" font-weight="bold" font-size="10" fill="#fff" textLength="11.500" lengthAdjust="spacingAndGlyphs">ATI</text><path d="M57 11l7-3 4 3-7 4z" fill="#c0c4c0" stroke="#606860" stroke-width="0.700"/><path d="M57 11v3l4 3 7-4v-2.500" fill="#9098a0" stroke="#606860" stroke-width="0.600"/><path d="M55 4l3-2 2 2.500 3-1.500-1 6.500-6-1.500 2-1.500z" fill="#40c840" stroke="#208020" stroke-width="0.600"/><rect x="71.500" y="2.500" width="6" height="5.500" fill="#a8acb4" stroke="#60646c" stroke-width="0.700"/><rect x="80" y="2.500" width="6" height="5.500" fill="#a8acb4" stroke="#60646c" stroke-width="0.700"/><rect x="75.500" y="12" width="6" height="5.500" fill="#a8acb4" stroke="#60646c" stroke-width="0.700"/><path d="M78.500 5v8" stroke="#60646c"/><circle cx="78.800" cy="9.500" r="3" fill="#1838e8"/><rect x="93" y="4" width="9" height="13.500" rx="1.500" fill="#2038d8" stroke="#101c80" stroke-width="0.800"/><rect x="95.500" y="2" width="4" height="2" fill="#8890a0"/><path d="M95 6v10" stroke="#88a8ff" stroke-width="1.400"/><path d="M97 7h3" stroke="#e83838" stroke-width="1"/><path d="M93.500 15.500h8" stroke="#c030c0" stroke-width="1"/></svg>
<div class="t" style="left:987px;top:7px;font-size:12px;letter-spacing:-0.61px;">13:14</div>
<div class="win" style="left:115px;top:100px;width:78px;height:152px"></div>
<div class="a" style="left:118px;top:104px;width:71px;height:17px;background:linear-gradient(to right,#7c7c7c,#bdbdbd)"></div>
<svg class="a" style="left:120px;top:104px" width="16" height="16" viewBox="0 0 16 16"><rect x="0" y="0" width="15.300" height="16" fill="#080808"/><path d="M1.500 0.800v14.400M13.800 0.800v5.800M13.800 10.400v4.800" stroke="#f4f4f4" stroke-width="1"/><path d="M2.800 1.200h10.500M2.800 14.800h10.500" stroke="#f4f4f4" stroke-width="1.100" stroke-dasharray="1.100 0.900"/><path d="M2.700 2L14.300 8.500 2.700 14.200z" fill="#f8f264"/><path d="M4 8.400h4.600M6.300 6.100v4.600" stroke="#000" stroke-width="1.100"/><path d="M0 4.700h1.800M13.800 8.500h2.200" stroke="#e02828" stroke-width="1.100"/><path d="M0 11h1.800" stroke="#2030d8" stroke-width="1.100"/></svg>
<div class="t" style="left:138px;top:106px;font-size:12px;transform:scaleX(0.861);transform-origin:0 0;font-weight:bold;color:#e2e0da">ツール</div>
<div class="btn" style="left:172px;top:105px;width:16px;height:14px;"></div><svg class="a" style="left:172px;top:105px" width="16" height="14" viewBox="0 0 16 14"><path d="M4.500 3.500l6.500 6.500M11 3.500l-6.500 6.500" stroke="#000" stroke-width="1.600"/></svg>
<div class="a" style="left:120px;top:123px;width:69px;height:21px;box-shadow:inset 1px 1px #fff,inset -1px -1px #808080"></div>
<svg class="a" style="left:124px;top:124px" width="24" height="20" viewBox="0 0 24 20" ><path d="M17.500 3.500L5 16" stroke="#6c7278" stroke-width="3.200"/><path d="M14 2.500a3.800 3.800 0 0 1 5 4.500l-2.500-.5-1.500-2z" fill="#6c7278"/><path d="M2.500 15a3.500 3.500 0 0 0 5 3.500l-3-1-1-1.500z" fill="#6c7278"/><circle cx="5" cy="16" r="2.600" fill="#6c7278"/><circle cx="16.500" cy="4.500" r="2.800" fill="#6c7278"/><path d="M17 1l3 3" stroke="#d8d5ce" stroke-width="2"/><path d="M2 18l2.500 2" stroke="#d8d5ce" stroke-width="1.800"/><path d="M3 2l8 8.500" stroke="#5c6268" stroke-width="2.400"/><path d="M11 10.500l6 6.500" stroke="#201810" stroke-width="5" stroke-linecap="round"/><path d="M11 10.500l6 6.500" stroke="#f08420" stroke-width="3.200" stroke-linecap="round"/></svg>
<div class="a" style="left:152px;top:126px;width:29px;height:13px;background:linear-gradient(to right,#1c4010,#3c7428 45%,#2c5c1c 70%,#1c4010);border:2px solid #a4a4a0;box-sizing:border-box"></div>
<div class="a" style="left:120px;top:145px;width:23px;height:23px;background:#848484;box-shadow:inset 1px 1px #404040,inset -1px -1px #fff"></div>
<div class="a" style="left:142px;top:145px;width:23px;height:23px;background:#d8d5ce;box-shadow:inset 1px 1px #fff,inset -1px -1px #505050"></div>
<div class="a" style="left:165px;top:145px;width:23px;height:23px;background:#d8d5ce;box-shadow:inset 1px 1px #fff,inset -1px -1px #505050"></div>
<div class="a" style="left:120px;top:167px;width:23px;height:23px;background:#d8d5ce;box-shadow:inset 1px 1px #fff,inset -1px -1px #505050"></div>
<div class="a" style="left:142px;top:167px;width:23px;height:23px;background:#d8d5ce;box-shadow:inset 1px 1px #fff,inset -1px -1px #505050"></div>
<div class="a" style="left:165px;top:167px;width:23px;height:23px;background:#d8d5ce;box-shadow:inset 1px 1px #fff,inset -1px -1px #505050"></div>
<div class="a" style="left:120px;top:189px;width:23px;height:23px;background:#d8d5ce;box-shadow:inset 1px 1px #fff,inset -1px -1px #505050"></div>
<div class="a" style="left:142px;top:189px;width:23px;height:23px;background:#d8d5ce;box-shadow:inset 1px 1px #fff,inset -1px -1px #505050"></div>
<div class="a" style="left:165px;top:189px;width:23px;height:23px;background:#d8d5ce;box-shadow:inset 1px 1px #fff,inset -1px -1px #505050"></div>
<svg class="a" style="left:123px;top:148px" width="18" height="17" viewBox="0 0 18 17" ><path d="M3 9q-2-1-1-2.500 1.500-1 3 .5l1 1V2.500q0-1.500 1.300-1.500T8.500 2.500v4q0-1 1.200-1t1.200 1v.8q0-1 1.100-1t1.100 1v.9q.1-.9 1-.9t1 1V12q0 2-1.500 3.500H8Q6 14 3 9z" fill="#fcd0a8" stroke="#000" stroke-width="1"/></svg>
<svg class="a" style="left:148.5px;top:150px" width="12" height="14" viewBox="0 0 12 14" ><path d="M2 1v9.500l2.300-2.300 1.700 3.800 1.600-.7-1.700-3.800h3.300z" fill="#fff" stroke="#000" stroke-width="1.300"/></svg>
<svg class="a" style="left:167px;top:146px" width="20" height="20" viewBox="0 0 20 20" ><text x="1" y="17" font-family="Liberation Serif,serif" font-size="22" fill="#000">A</text><path d="M16.500 2v15M15 2h3M15 17h3" stroke="#000" stroke-width="1" stroke-dasharray="1 1"/></svg>
<svg class="a" style="left:122px;top:169px" width="20" height="19" viewBox="0 0 20 19" ><path d="M4 8l8-5 5 8-8 5z" fill="#604030" stroke="#000" stroke-width="1"/><path d="M6 9l8-5M7.500 11l8-5M9 13l8-5" stroke="#a08060" stroke-width="0.800"/><path d="M2 3q5-2 8 2" fill="none" stroke="#000" stroke-width="1.200"/><path d="M12 3l6 3-1 6z" fill="#000"/></svg>
<svg class="a" style="left:144px;top:169px" width="20" height="19" viewBox="0 0 20 19" ><path d="M2 1v9l2.500-2.500 1.500 3.500 1.500-.7L6 7h3.500z" fill="#000"/><rect x="8" y="8.500" width="10" height="9" fill="#fff" stroke="#000" stroke-width="1.200"/><path d="M9.500 11.500h7M9.500 14.500h7" stroke="#000" stroke-width="1.300"/></svg>
<svg class="a" style="left:167px;top:169px" width="20" height="19" viewBox="0 0 20 19" ><path d="M5 17q-3-3-3.500-7 0-1.500 1.200-1.500T4.500 10V4.500q0-1.300 1.200-1.300T7 4.500V3q0-1.300 1.300-1.300T9.600 3v1q0-1.300 1.300-1.300T12.200 4v1.500q0-1.200 1.200-1.200t1.200 1.200V11q0 4-2 6z" fill="#fcd0a8" stroke="#000" stroke-width="1"/></svg>
<svg class="a" style="left:122.5px;top:192.5px" width="20" height="19" viewBox="0 0 20 19" ><g transform="scale(0.86)"><path d="M6.500 3h7l4 4v7l-4 4h-7l-4-4V7z" fill="#f00000" stroke="#fff" stroke-width="1.200"/><path d="M6 2.500h8l4.500 4.500v8L14 19.500H6L1.500 15V7z" fill="none" stroke="#000" stroke-width="0.900"/><path d="M1 1l3 3M1 1h2.500M1 1v2.500" stroke="#000" stroke-width="1"/></g></svg>
<svg class="a" style="left:144px;top:191px" width="20" height="19" viewBox="0 0 20 19" ><path d="M1 9.500h18" stroke="#000" stroke-width="1.200"/><path d="M1.500 9.500l3-2.500v5z" fill="#000"/><circle cx="11" cy="9.500" r="4.500" fill="#f8e820" stroke="#000" stroke-width="1.200"/><text x="8.300" y="12.700" font-family="Liberation Sans,sans-serif" font-weight="bold" font-size="8.500" fill="#000">P</text></svg>
<svg class="a" style="left:167px;top:191px" width="20" height="19" viewBox="0 0 20 19" ><path d="M3 17l1.500-3.500 8-8 2 2-8 8z" fill="#c8ecf8" stroke="#3070a0" stroke-width="1"/><path d="M11 4.500l3.500 3.500" stroke="#000" stroke-width="2.500"/><path d="M13 4l3-3q1.500-.5 2.500.5t.5 2.500l-3 3z" fill="#e01818" stroke="#800" stroke-width="0.600"/></svg>
<div class="a" style="left:120px;top:212px;width:69px;height:36px;box-shadow:inset 1px 1px #fff,inset -1px -1px #808080"></div>
<svg class="a" style="left:122px;top:214px" width="36" height="32" viewBox="0 0 36 32" ><rect x="15" y="13" width="19" height="16" fill="#000"/><rect x="13" y="11" width="19" height="16" fill="#a4a4a4" stroke="#000" stroke-width="1"/><rect x="3" y="3" width="19" height="16" fill="#000"/><rect x="1" y="1" width="19" height="16" fill="#a8a8a8" stroke="#000" stroke-width="1"/></svg>
<svg class="a" style="left:160px;top:216px" width="26" height="28" viewBox="0 0 26 28" ><path d="M24 2L12 16" stroke="#c8a070" stroke-width="3"/><path d="M24 2L12 16" stroke="#806040" stroke-width="0.700" transform="translate(1.500,1)"/><path d="M14 13l3 3-4 4-4-2z" fill="#202020"/><path d="M3 23q2-5 6.500-5.500l2 2Q9 24 3 23z" fill="#101010"/><path d="M4 22.500q2-3 4.500-3.500l1 1q-2 2.500-5.500 2.500z" fill="#f0e020"/></svg>
<div class="win" style="left:67px;top:329px;width:136px;height:266px"></div>
<div class="a" style="left:70px;top:332px;width:130px;height:18px;background:linear-gradient(to right,#7c7c7c,#c4c4c4)"></div>
<svg class="a" style="left:72px;top:333px" width="16" height="16" viewBox="0 0 16 16"><rect x="0" y="0" width="15.300" height="16" fill="#080808"/><path d="M1.500 0.800v14.400M13.800 0.800v5.800M13.800 10.400v4.800" stroke="#f4f4f4" stroke-width="1"/><path d="M2.800 1.200h10.500M2.800 14.800h10.500" stroke="#f4f4f4" stroke-width="1.100" stroke-dasharray="1.100 0.900"/><path d="M2.700 2L14.300 8.500 2.700 14.200z" fill="#f8f264"/><path d="M4 8.400h4.600M6.300 6.100v4.600" stroke="#000" stroke-width="1.100"/><path d="M0 4.700h1.800M13.800 8.500h2.200" stroke="#e02828" stroke-width="1.100"/><path d="M0 11h1.800" stroke="#2030d8" stroke-width="1.100"/></svg>
<div class="t" style="left:91px;top:335px;font-size:13px;transform:scaleX(0.974);transform-origin:0 0;font-weight:bold;color:#e2e0da">制御器</div>
<div class="btn" style="left:183px;top:334px;width:16px;height:14px;"></div><svg class="a" style="left:183px;top:334px" width="16" height="14" viewBox="0 0 16 14"><path d="M4.500 3.500l6.500 6.500M11 3.500l-6.500 6.500" stroke="#000" stroke-width="1.600"/></svg>
<div class="btn" style="left:72px;top:353px;width:33px;height:28px;background:#dedbd4"></div>
<div class="btn" style="left:105px;top:353px;width:33px;height:28px;background:#dedbd4"></div>
<div class="btn" style="left:138px;top:353px;width:33px;height:28px;background:#dedbd4"></div>
<div class="btn" style="left:171px;top:353px;width:28px;height:28px;background:#dedbd4"></div>
<svg class="a" style="left:81px;top:359px" width="16" height="16" viewBox="0 0 16 16" ><path d="M8 1.500l6 6.500h-3.500v6.500h-5V8H2z" fill="#dcdce8" stroke="#888890" stroke-width="1.100"/></svg>
<svg class="a" style="left:113px;top:358px" width="22" height="22" viewBox="0 0 22 22" ><g transform="scale(0.86)"><circle cx="8.500" cy="8" r="6.500" fill="#c8d4f8" stroke="#404890" stroke-width="1.400"/><circle cx="7" cy="6" r="2.500" fill="#f0f4ff"/><path d="M13 13l5.500 5.500" stroke="#c08040" stroke-width="3" stroke-linecap="round"/><path d="M13 13l5.500 5.500" stroke="#604020" stroke-width="0.800" transform="translate(-1,1)"/></g></svg>
<svg class="a" style="left:146px;top:358px" width="20" height="18" viewBox="0 0 20 18" ><circle cx="3.500" cy="4.500" r="2.300" fill="#8080e0" stroke="#000" stroke-width="0.900"/><circle cx="3.500" cy="12.500" r="2.300" fill="#fff" stroke="#000" stroke-width="0.900"/><path d="M7 5l1.500-1.500L10 5l1.500-1.500L13 5l1.500-1.500M7 13l1.500-1.500L10 13l1.500-1.500L13 13l1.500-1.500" stroke="#000" stroke-width="0.900" fill="none"/></svg>
<div class="a" style="left:73px;top:381px;width:126px;height:210px;box-shadow:inset 1px 1px #fff,inset -1px -1px #404040,inset -2px -2px #808080"></div>
<div class="a" style="left:79px;top:400px;width:37px;height:37px;background:#d8d5ce;box-shadow:inset 1px 1px #fff,inset -1px -1px #7c7c78"></div>
<div class="a" style="left:116px;top:400px;width:37px;height:37px;background:#d8d5ce;box-shadow:inset 1px 1px #fff,inset -1px -1px #7c7c78"></div>
<div class="a" style="left:153px;top:400px;width:37px;height:37px;background:#d8d5ce;box-shadow:inset 1px 1px #fff,inset -1px -1px #7c7c78"></div>
<div class="a" style="left:79px;top:437px;width:37px;height:37px;background:#d8d5ce;box-shadow:inset 1px 1px #fff,inset -1px -1px #7c7c78"></div>
<div class="a" style="left:116px;top:437px;width:37px;height:37px;background:#d8d5ce;box-shadow:inset 1px 1px #fff,inset -1px -1px #7c7c78"></div>
<div class="a" style="left:153px;top:437px;width:37px;height:37px;background:#d8d5ce;box-shadow:inset 1px 1px #fff,inset -1px -1px #7c7c78"></div>
<div class="a" style="left:79px;top:474px;width:37px;height:37px;background:#d8d5ce;box-shadow:inset 1px 1px #fff,inset -1px -1px #7c7c78"></div>
<div class="a" style="left:116px;top:474px;width:37px;height:37px;background:#d8d5ce;box-shadow:inset 1px 1px #fff,inset -1px -1px #7c7c78"></div>
<div class="a" style="left:153px;top:474px;width:37px;height:37px;background:#d8d5ce;box-shadow:inset 1px 1px #fff,inset -1px -1px #7c7c78"></div>
<div class="a" style="left:79px;top:511px;width:37px;height:37px;background:#d8d5ce;box-shadow:inset 1px 1px #fff,inset -1px -1px #7c7c78"></div>
<div class="a" style="left:116px;top:511px;width:37px;height:37px;background:#d8d5ce;box-shadow:inset 1px 1px #fff,inset -1px -1px #7c7c78"></div>
<div class="a" style="left:153px;top:511px;width:37px;height:37px;background:#d8d5ce;box-shadow:inset 1px 1px #fff,inset -1px -1px #7c7c78"></div>
<div class="a" style="left:79px;top:548px;width:37px;height:37px;background:#d8d5ce;box-shadow:inset 1px 1px #fff,inset -1px -1px #7c7c78"></div>
<div class="a" style="left:116px;top:548px;width:37px;height:37px;background:#d8d5ce;box-shadow:inset 1px 1px #fff,inset -1px -1px #7c7c78"></div>
<div class="a" style="left:153px;top:548px;width:37px;height:37px;background:#d8d5ce;box-shadow:inset 1px 1px #fff,inset -1px -1px #7c7c78"></div>
<svg class="a" style="left:0;top:0" width="1024" height="600"><rect x="83" y="403" width="4.800" height="27.500" rx="2.400" fill="#a4acbc" stroke="#787e8c" stroke-width="0.600"/><path d="M83.300 418h4.200v10q-2.100 3-4.200 0z" fill="#e02020"/><path d="M84.300 405v12" stroke="#d0d4e0" stroke-width="1"/><path d="M81 406h2M81 427.500h2" stroke="#000" stroke-width="1"/><rect x="90.500" y="417.500" width="19" height="11.500" fill="#fff" stroke="#a4a4a4" stroke-width="2.400"/><text x="92.800" y="426.300" font-family="Liberation Sans,sans-serif" font-size="9" textLength="14.500" lengthAdjust="spacingAndGlyphs" stroke="#000" stroke-width="0.300">1.23</text><path d="M109 402.5l3.700 3.400-3.700 3.400z" fill="#000"/><path d="M124 410l6 14q2 4-1.500 4.500t-5-3z" fill="#8c8c8c" opacity="0.750"/><rect x="119" y="405.500" width="8.500" height="17.500" rx="4" fill="#a8a8a8" stroke="#7c7c7c" stroke-width="0.800"/><path d="M121.500 408q2-2 3.500 0v12h-3.500z" fill="#d4d4d4"/><path d="M120.500 408q1-2 3-2" stroke="#f4f4f4" stroke-width="1.200" fill="none"/><circle cx="140" cy="421" r="6.800" fill="#9cb49c"/><circle cx="140" cy="421" r="5.600" fill="#20e038"/><circle cx="138.800" cy="419.500" r="2.500" fill="#70f480" opacity="0.800"/><path d="M146 402.5l3.700 3.400-3.700 3.400z" fill="#000"/><rect x="156.500" y="403.800" width="21" height="10.500" fill="#fff" stroke="#a4a4a4" stroke-width="2.200"/><text x="159.800" y="412.500" font-family="Liberation Sans,sans-serif" font-size="9.500" textLength="14.500" lengthAdjust="spacingAndGlyphs" stroke="#000" stroke-width="0.300">abc</text><rect x="156.500" y="419.800" width="21" height="11" fill="#fff" stroke="#a4a4a4" stroke-width="2.200"/><text x="158.800" y="429" font-family="Liberation Sans,sans-serif" font-size="9.500" textLength="17" lengthAdjust="spacingAndGlyphs" stroke="#000" stroke-width="0.300">Path</text><path d="M182.5 402.5l3.700 3.400-3.700 3.400z" fill="#000"/><rect x="80.5" y="440.500" width="6" height="7" fill="#fff" stroke="#000" stroke-width="0.800"/><text x="82" y="447" font-family="Liberation Sans,sans-serif" font-size="6.500" font-weight="bold">i</text><rect x="87.5" y="440.500" width="6" height="7" fill="#fff" stroke="#000" stroke-width="0.800"/><text x="89" y="447" font-family="Liberation Sans,sans-serif" font-size="6.500" font-weight="bold">1</text><rect x="94.5" y="440.500" width="6" height="7" fill="#fff" stroke="#000" stroke-width="0.800"/><text x="96" y="447" font-family="Liberation Sans,sans-serif" font-size="6.500" font-weight="bold">2</text><rect x="87.5" y="448.500" width="6" height="7" fill="#fff" stroke="#000" stroke-width="0.800"/><text x="89" y="455" font-family="Liberation Sans,sans-serif" font-size="6.500" font-weight="bold">3</text><rect x="94.5" y="448.500" width="6" height="7" fill="#fff" stroke="#000" stroke-width="0.800"/><text x="96" y="455" font-family="Liberation Sans,sans-serif" font-size="6.500" font-weight="bold">4</text><rect x="96.500" y="458.500" width="13" height="10" fill="#fff" stroke="#000"/><rect x="98" y="460.500" width="4" height="3" fill="#3050d0"/><rect x="98" y="464.500" width="4" height="3" fill="#3050d0"/><rect x="104" y="460.500" width="4" height="6" fill="#e02020"/><path d="M109 439.5l3.700 3.400-3.700 3.400z" fill="#000"/><rect x="117.500" y="439" width="24" height="16" fill="#fff" stroke="#000"/><rect x="118" y="439.500" width="23" height="7" fill="#1020a0"/><text x="119.500" y="445.800" font-family="Liberation Sans,sans-serif" font-size="7" font-weight="bold" fill="#fff" letter-spacing="1.200">LIST</text><path d="M129.500 448v6" stroke="#000" stroke-width="1.200" stroke-dasharray="1.200 1"/><rect x="119.500" y="458.500" width="25" height="10" fill="#fff" stroke="#000"/><rect x="120" y="459" width="24" height="3.500" fill="#a8a8a8"/><path d="M119.500 463.500h25M125.500 458.500v10M131.500 458.500v10M137.500 458.500v10" stroke="#000"/><path d="M146 439.5l3.700 3.400-3.700 3.400z" fill="#000"/><rect x="155" y="443" width="27" height="26" fill="#b0b0b0" stroke="#fff"/><path d="M155 469.500h27.500v-27" stroke="#404040" fill="none" stroke-width="1.500"/><rect x="162" y="446" width="15" height="16" fill="#000"/><path d="M163 455q3-12 6.500-1t6.500-1" fill="none" stroke="#30e040" stroke-width="1.200"/><text x="157" y="451" font-family="Liberation Sans,sans-serif" font-size="6" font-weight="bold">2</text><text x="157" y="457" font-family="Liberation Sans,sans-serif" font-size="6" font-weight="bold">1</text><text x="157" y="463" font-family="Liberation Sans,sans-serif" font-size="6" font-weight="bold">0</text><text x="161" y="468" font-family="Liberation Sans,sans-serif" font-size="5.500" font-weight="bold">0.0 1.0</text><path d="M182.5 440l3.700 3.400-3.700 3.400z" fill="#000"/><rect x="80.500" y="476.500" width="26" height="10" fill="#d4d0c8" stroke="#000"/><path d="M81.500 486v-8.500h24" stroke="#fff" fill="none"/><text x="82.500" y="485" font-family="Liberation Sans,sans-serif" font-size="8.500" font-weight="bold" textLength="15.500" lengthAdjust="spacingAndGlyphs">Ring</text><path d="M99.500 480h5l-2.500 3.500z" fill="#606060"/><rect x="80.500" y="491" width="5" height="12" rx="2.500" fill="#fff" stroke="#000" stroke-width="0.800"/><path d="M80.500 497h5" stroke="#000" stroke-width="0.800"/><rect x="86.500" y="492.500" width="25" height="10" fill="#d4d0c8" stroke="#000"/><path d="M87.500 502v-8.500h23" stroke="#fff" fill="none"/><text x="88" y="501" font-family="Liberation Sans,sans-serif" font-size="8.500" font-weight="bold" textLength="17" lengthAdjust="spacingAndGlyphs">Enum</text><path d="M106 496h4.500l-2.200 3.500z" fill="#606060"/><path d="M109 476.5l3.700 3.400-3.700 3.400z" fill="#000"/><rect x="120.500" y="478.500" width="8" height="6" fill="#fff" stroke="#000" stroke-width="1.200"/><path d="M119 487.500h11" stroke="#000" stroke-width="1.500"/><path d="M131 489l5 5M131 489h2.500M131 489v2.500M136 494h-2.500M136 494v-2.500" stroke="#000" stroke-width="0.900"/><rect x="126.500" y="494.500" width="21" height="11" fill="#fff" stroke="#000"/><path d="M129 503v-5h3.500v5h3.500v-5h3.500v5h3.500v-5h2" fill="none" stroke="#1020a0" stroke-width="1.200"/><path d="M146 476.5l3.700 3.400-3.700 3.400z" fill="#000"/><path d="M160.500 480.500h10l5 5v17h-15z" fill="#f0f0f0" stroke="#707070"/><path d="M170.500 480.500v5h5" fill="#c8c8c8" stroke="#707070"/><path d="M176.500 486v17.500h-15" stroke="#909090" fill="none"/><text x="163" y="499" font-family="Liberation Sans,sans-serif" font-size="12" font-weight="bold" fill="#303030">#</text><path d="M182.5 476.5l3.700 3.400-3.700 3.400z" fill="#000"/><path d="M81.5 521.5v-3.500l1.500-2h7l1.500 2h19v3.500z" fill="#e8e4b8" stroke="#000" stroke-width="0.800"/><rect x="81.5" y="521.5" width="29" height="22" fill="#f8f4c8" stroke="#000" stroke-width="0.900"/><rect x="84.500" y="525.500" width="23" height="15" fill="#d8d8d8" stroke="#404040" stroke-width="0.800"/><rect x="85" y="526" width="22" height="3" fill="#1020a0"/><rect x="88" y="531" width="16" height="4" fill="#fff"/><path d="M89 538h5M98 538h5" stroke="#808080" stroke-width="1.800"/><path d="M109 514l3.700 3.400-3.700 3.400z" fill="#000"/><path d="M118.5 521.5v-3.500l1.500-2h7l1.500 2h19v3.500z" fill="#e8e4b8" stroke="#000" stroke-width="0.800"/><rect x="118.5" y="521.5" width="29" height="22" fill="#f8f4c8" stroke="#000" stroke-width="0.900"/><circle cx="126.500" cy="529" r="3" fill="#f0d0d0" stroke="#803030" stroke-width="0.800"/><path d="M122 526l1.200.6M126.500 524v1.200M131 526l-1.200.6" stroke="#000" stroke-width="0.700"/><path d="M126.500 529l1.500-2" stroke="#c02020" stroke-width="0.800"/><circle cx="140" cy="529" r="3" fill="#30c040" stroke="#206020" stroke-width="1"/><rect x="123" y="535" width="8" height="6" fill="#707070" stroke="#000" stroke-width="0.700" stroke-dasharray="1 0.500"/><path d="M133.500 535.500h2.500M133.500 537.500h2.500M133.500 539.500h2.500" stroke="#000" stroke-width="0.800"/><rect x="138" y="534.500" width="4.500" height="7" rx="1.500" fill="#fff" stroke="#000" stroke-width="0.800"/><rect x="138" y="538" width="4.500" height="3.500" rx="1" fill="#2030c0"/><path d="M146 514l3.700 3.400-3.700 3.400z" fill="#000"/><rect x="154.500" y="512.500" width="19" height="15" fill="#d4d0c8" stroke="#404040" stroke-width="0.900"/><rect x="155" y="513" width="18" height="3" fill="#1030d0"/><path d="M156 513.500l2 2M158 513.500l-2 2M170 513.500l2 2M172 513.500l-2 2" stroke="#f0e040" stroke-width="0.700"/><rect x="159.500" y="518.500" width="8" height="7" fill="#e8e8e8" stroke="#000" stroke-width="0.800"/><path d="M161.500 520l4 4M165.500 520l-4 4" stroke="#000" stroke-width="1.400"/><path d="M172 521h8v4" stroke="#808080" stroke-width="3.500" fill="none"/><path d="M177.500 525h5l-2.500 3z" fill="#000"/><rect x="154.500" y="531.500" width="31" height="11" rx="4" fill="#f8f4c0" stroke="#000" stroke-width="1.100"/><text x="156.500" y="540.500" font-family="Liberation Sans,sans-serif" font-size="9" font-weight="bold" textLength="27" lengthAdjust="spacingAndGlyphs">A<tspan font-size="7">CTIVE</tspan>X</text><path d="M183 513l3.700 3.400-3.700 3.400z" fill="#000"/><rect x="83.500" y="552.500" width="10" height="10" fill="#d0d0d0" stroke="#404040" stroke-width="1.200"/><path d="M97 552l11 11" stroke="#000" stroke-width="1"/><rect x="83.500" y="568.500" width="11" height="10" rx="3" fill="#d0d0d0" stroke="#000" stroke-width="1.200"/><rect x="98.500" y="568.500" width="11" height="10" fill="#fff" stroke="#000" stroke-width="1.200"/><path d="M109 549l3.700 3.400-3.700 3.400z" fill="#000"/><path d="M124 555q0-2.500 2.500-2.500h16q2.500 0 2.500 2.500v13q0 3-2.500 3h-14l-4 4 1-4q-1.500 0-1.500-3z" fill="#f4f4f4" stroke="#000" stroke-width="1.100"/><path d="M129.500 556.500h6l3 3v9h-9z" fill="#fff" stroke="#000" stroke-width="0.800"/><path d="M133.500 558v9" stroke="#000" stroke-width="1" stroke-dasharray="2 1"/><path d="M131 562.500h2M135 564.500h2" stroke="#000" stroke-width="0.800"/><path d="M134 576.500h2M137.500 576.500h2M141 576.500h2" stroke="#000" stroke-width="1.500"/><path d="M154 563.500h31M154 579.500h31" stroke="#807830" stroke-width="2"/><rect x="156" y="553" width="3" height="9.500" fill="#e8e8e8" stroke="#404040" stroke-width="0.600"/><rect x="160" y="555" width="5" height="7.500" fill="#804818"/><path d="M168 552l5 9" stroke="#e8d890" stroke-width="3"/><rect x="176" y="554" width="3.500" height="8.500" fill="#208040"/><rect x="156" y="570" width="4" height="8.500" fill="#2060d0"/><rect x="160.500" y="569" width="4.500" height="9.500" fill="#c01818"/><path d="M168 577l4-7" stroke="#208040" stroke-width="3.500"/><rect x="176" y="570" width="3" height="8.500" fill="#804818"/><rect x="179.500" y="568" width="3" height="10.500" fill="#e8e8e8" stroke="#404040" stroke-width="0.600"/><path d="M183 549l3.700 3.400-3.700 3.400z" fill="#000"/></svg>
<div class="win" style="left:213px;top:46px;width:791px;height:538px"></div>
<div class="a" style="left:217px;top:50px;width:782px;height:18px;background:linear-gradient(to right,#0a246a 0%,#a6caf0 100%)"></div>
<svg class="a" style="left:219px;top:51px" width="16" height="16" viewBox="0 0 16 16"><rect x="0" y="0" width="15.300" height="16" fill="#080808"/><path d="M1.500 0.800v14.400M13.800 0.800v5.800M13.800 10.400v4.800" stroke="#f4f4f4" stroke-width="1"/><path d="M2.800 1.200h10.500M2.800 14.800h10.500" stroke="#f4f4f4" stroke-width="1.100" stroke-dasharray="1.100 0.900"/><path d="M2.700 2L14.300 8.500 2.700 14.200z" fill="#f8f264"/><path d="M4 8.400h4.600M6.300 6.100v4.600" stroke="#000" stroke-width="1.100"/><path d="M0 4.700h1.800M13.800 8.500h2.200" stroke="#e02828" stroke-width="1.100"/><path d="M0 11h1.800" stroke="#2030d8" stroke-width="1.100"/></svg>
<div class="t" style="left:237px;top:52px;font-size:13px;letter-spacing:-0.08px;font-weight:bold;color:#fff">tester01.vi</div>
<div class="btn" style="left:948px;top:52px;width:16px;height:14px;"></div>
<div class="btn" style="left:964px;top:52px;width:16px;height:14px;"></div>
<div class="btn" style="left:982px;top:52px;width:16px;height:14px;"></div>
<svg class="a" style="left:948px;top:52px" width="50" height="14" viewBox="0 0 50 14"><path d="M4 9.500h6v2h-6z" fill="#000"/><path d="M19.500 2.500h9v8h-9z" fill="none" stroke="#000"/><path d="M19 3h10" stroke="#000" stroke-width="2"/><path d="M38.500 3.500l7 7M45.500 3.500l-7 7" stroke="#000" stroke-width="1.500"/></svg>
<div class="a" style="left:218px;top:70px;width:781px;height:510px;box-shadow:inset 1px 1px #404040,inset -1px -1px #fff"></div>
<div class="t" style="left:222.5px;top:73px;font-size:12px;transform:scaleX(0.698);transform-origin:0 0;">ファイル</div>
<div class="t" style="left:257px;top:73px;font-size:12px;transform:scaleX(0.958);transform-origin:0 0;">(<u>F</u>)</div>
<div class="t" style="left:281px;top:73px;font-size:12px;transform:scaleX(0.937);transform-origin:0 0;">編集</div>
<div class="t" style="left:304.9px;top:73px;font-size:12px;transform:scaleX(0.880);transform-origin:0 0;">(<u>E</u>)</div>
<div class="t" style="left:329.3px;top:73px;font-size:12px;transform:scaleX(0.933);transform-origin:0 0;">操作</div>
<div class="t" style="left:353.3px;top:73px;font-size:12px;transform:scaleX(0.848);transform-origin:0 0;">(<u>O</u>)</div>
<div class="t" style="left:377.7px;top:73px;font-size:12px;transform:scaleX(0.736);transform-origin:0 0;">ツール</div>
<div class="t" style="left:405.5px;top:73px;font-size:12px;transform:scaleX(0.997);transform-origin:0 0;">(<u>T</u>)</div>
<div class="t" style="left:431.3px;top:73px;font-size:12px;transform:scaleX(0.933);transform-origin:0 0;">参照</div>
<div class="t" style="left:455.3px;top:73px;font-size:12px;transform:scaleX(0.918);transform-origin:0 0;">(<u>B</u>)</div>
<div class="t" style="left:479.7px;top:73px;font-size:12px;transform:scaleX(0.728);transform-origin:0 0;">ウィンドウ</div>
<div class="t" style="left:524.4px;top:73px;font-size:12px;transform:scaleX(0.755);transform-origin:0 0;">(<u>W</u>)</div>
<div class="t" style="left:549.4px;top:73px;font-size:12px;transform:scaleX(0.786);transform-origin:0 0;">ヘルプ</div>
<div class="t" style="left:578.7px;top:73px;font-size:12px;transform:scaleX(0.882);transform-origin:0 0;">(<u>H</u>)</div>
<div class="a" style="left:219px;top:87px;width:745px;height:1px;background:#808080"></div>
<div class="a" style="left:219px;top:88px;width:745px;height:1px;background:#fff"></div>
<div class="a" style="left:249px;top:90px;width:22px;height:21px;background:#e2dfd8;box-shadow:inset 0 0 0 1px #484848,inset 2px 2px #fff,inset -2px -2px #a8a49c"></div>
<div class="a" style="left:270px;top:90px;width:22px;height:21px;background:#e2dfd8;box-shadow:inset 0 0 0 1px #484848,inset 2px 2px #fff,inset -2px -2px #a8a49c"></div>
<div class="a" style="left:317px;top:90px;width:22px;height:21px;background:#e2dfd8;box-shadow:inset 0 0 0 1px #484848,inset 2px 2px #fff,inset -2px -2px #a8a49c"></div>
<svg class="a" style="left:249px;top:90px" width="90" height="21" viewBox="0 0 90 21"><path d="M12.100 4.100L19 10.400 12.100 16.800z" fill="#000"/><rect x="8" y="7.600" width="4.400" height="5.400" fill="#000"/><path d="M4.600 8v4.600M6.700 8v4.600M8.700 4.100v2.600M10.800 4.100v2.600M8.700 14.200v2.600M10.800 14.200v2.600" stroke="#000" stroke-width="0.900"/><g transform="translate(21,0)"><path d="M7.200 4.100L15.200 4.100 17.400 6.300 17.400 9.200 19.200 9.200 15.200 12.800 11.200 9.200 13.400 9.200 13.400 7.300 12.300 6.200 9.300 6.200Z" fill="#000"/><path d="M7.200 4.100L15.200 4.100 17.400 6.300 17.400 9.200 19.200 9.200 15.200 12.800 11.200 9.200 13.400 9.200 13.400 7.300 12.300 6.200 9.300 6.200Z" fill="#000" transform="rotate(180 11.250 10.450)"/></g><rect x="74" y="5.300" width="4" height="9.500" fill="#dc0000"/><rect x="80.300" y="5.300" width="4" height="9.500" fill="#dc0000"/></svg>
<div class="a" style="left:963px;top:70px;width:1px;height:43px;background:#404040"></div>
<div class="a" style="left:964px;top:70px;width:35px;height:42px;background:#e8e6e0"></div>
<svg class="a" style="left:965px;top:75px" width="32" height="32" viewBox="0 0 32 32"><rect x="0.5" y="0.5" width="31" height="31" fill="#c8c8c8" stroke="#000"/><rect x="2" y="2" width="22" height="12" fill="#000"/><path d="M2 8q2.800-8 5.500 0t5.500 0 5.500 0 5.500 0" fill="none" stroke="#40e060" stroke-width="1.200"/><rect x="2" y="15.500" width="22" height="10" fill="#000"/><path d="M3.500 25v-8M6 25v-6M8.500 25v-5M11 25v-4M13.500 25v-4M16 25v-3M18.500 25v-3M21 25v-2" stroke="#f0e020" stroke-width="1.400"/><path d="M2 25h22" stroke="#f0e020"/><circle cx="27.500" cy="5" r="1.500" fill="#888"/><rect x="26" y="9" width="3" height="6" rx="1.500" fill="#888"/><rect x="26" y="17" width="3" height="6" rx="1.500" fill="#888"/><path d="M3 28.500h4M9 28.500h8M19 28.500h4" stroke="#888" stroke-width="2"/><ellipse cx="27.500" cy="28.500" rx="2.500" ry="1.700" fill="#e01010"/></svg>
<div class="a" style="left:218px;top:112px;width:781px;height:1px;background:#404040"></div>
<div class="a" style="left:218px;top:113px;width:1px;height:450px;background:#404040"></div>
<div class="a" style="left:219px;top:113px;width:763px;height:450px;background:#fdfdfd"></div>
<div class="a" style="left:982px;top:113px;width:16px;height:451px;background:#dfdcd6"></div>
<div class="btn" style="left:982px;top:113px;width:16px;height:15px;"></div>
<div class="btn" style="left:982px;top:549px;width:16px;height:15px;"></div>
<div class="a" style="left:982px;top:128px;width:16px;height:1px;background:#d4d0c8"></div>
<div class="btn" style="left:982px;top:192px;width:16px;height:285px;"></div>
<div class="a" style="left:219px;top:563px;width:763px;height:16px;background:#dfdcd6"></div>
<div class="btn" style="left:219px;top:563px;width:16px;height:16px;"></div>
<div class="btn" style="left:966px;top:563px;width:16px;height:16px;"></div>
<div class="btn" style="left:347px;top:563px;width:505px;height:16px;"></div>
<div class="a" style="left:982px;top:564px;width:16px;height:15px;background:#d4d0c8"></div>
<svg class="a" style="left:0;top:0" width="1024" height="600"><path d="M986.500 123h7l-3.500-4zM986.500 555h7l-3.500 4zM229 567v8l-4-4zM972 567v8l4-4z" fill="#000"/><path d="M996.500 566l-11 11M996.500 570l-7 7M996.500 574l-3 3" stroke="#808080"/><path d="M996.500 567l-10 10M996.500 571l-6 6M996.500 575l-2 2" stroke="#fff"/></svg>
<svg class="a" style="left:0;top:0" width="1024" height="600" font-family='"Liberation Sans",sans-serif' font-size="13"><defs><clipPath id="c1"><rect x="282" y="136" width="292" height="159"/></clipPath><clipPath id="c2"><rect x="649" y="136" width="293" height="159"/></clipPath><clipPath id="c3"><rect x="280" y="323" width="293" height="188"/></clipPath><clipPath id="c4"><rect x="648" y="323" width="292" height="188"/></clipPath></defs><rect x="243" y="127" width="352" height="184" fill="#fdfdfd"/><path d="M595.5 127V311.5H243" fill="none" stroke="#8c8c8c" stroke-width="1.2"/><rect x="611" y="127" width="351" height="184" fill="#fdfdfd"/><path d="M962.5 127V311.5H611" fill="none" stroke="#8c8c8c" stroke-width="1.2"/><rect x="243" y="319" width="352" height="212" fill="#fdfdfd"/><path d="M595.5 319V531.5H243" fill="none" stroke="#8c8c8c" stroke-width="1.2"/><rect x="611" y="319" width="351" height="212" fill="#fdfdfd"/><path d="M962.5 319V531.5H611" fill="none" stroke="#8c8c8c" stroke-width="1.2"/><rect x="282" y="136" width="292" height="159" fill="#fbfffb"/><path d="M282.5 136V295M290.5 136V295M299.5 136V295M308.5 136V295M316.5 136V295M324.5 136V295M333.5 136V295M342.5 136V295M350.5 136V295M358.5 136V295M367.5 136V295M376.5 136V295M384.5 136V295M392.5 136V295M401.5 136V295M410.5 136V295M418.5 136V295M426.5 136V295M435.5 136V295M444.5 136V295M452.5 136V295M460.5 136V295M469.5 136V295M478.5 136V295M486.5 136V295M494.5 136V295M503.5 136V295M512.5 136V295M520.5 136V295M528.5 136V295M537.5 136V295M546.5 136V295M554.5 136V295M562.5 136V295M571.5 136V295" stroke="#c6f3f6" stroke-width="1" fill="none"/><path d="M282.5 136V295M367.5 136V295M452.5 136V295M537.5 136V295" stroke="#90ecf2" stroke-width="1" fill="none"/><path d="M282 141.5H574M282 146.5H574M282 151.5H574M282 156.5H574M282 162.5H574M282 167.5H574M282 172.5H574M282 177.5H574M282 182.5H574M282 187.5H574M282 192.5H574M282 197.5H574M282 202.5H574M282 208.5H574M282 213.5H574M282 218.5H574M282 223.5H574M282 228.5H574M282 233.5H574M282 238.5H574M282 243.5H574M282 248.5H574M282 254.5H574M282 259.5H574M282 264.5H574M282 269.5H574M282 274.5H574M282 279.5H574M282 284.5H574M282 289.5H574M282 294.5H574" stroke="#b6ecb6" stroke-width="1" fill="none"/><path d="M282 136.5H574M282 156.5H574M282 177.5H574M282 197.5H574M282 218.5H574M282 238.5H574M282 259.5H574M282 279.5H574" stroke="#4ccc4c" stroke-width="1.200" fill="none"/><path d="M282.500 295V136.500H574" fill="none" stroke="#4a90a8" stroke-width="1"/><path d="M275.5 136.5H281" stroke="#3cc83c" stroke-width="1.300"/><text x="273.5" y="140.5" text-anchor="end" font-size="13" font-weight="normal" textLength="26.0" lengthAdjust="spacingAndGlyphs" stroke="#000" stroke-width="0.250" >10.00</text><path d="M275.5 157.5H281" stroke="#3cc83c" stroke-width="1.300"/><text x="273.5" y="161.5" text-anchor="end" font-size="13" font-weight="normal" textLength="20.2" lengthAdjust="spacingAndGlyphs" stroke="#000" stroke-width="0.250" >8.00</text><path d="M275.5 177.5H281" stroke="#3cc83c" stroke-width="1.300"/><text x="273.5" y="181.5" text-anchor="end" font-size="13" font-weight="normal" textLength="20.2" lengthAdjust="spacingAndGlyphs" stroke="#000" stroke-width="0.250" >6.00</text><path d="M275.5 198.5H281" stroke="#3cc83c" stroke-width="1.300"/><text x="273.5" y="202.5" text-anchor="end" font-size="13" font-weight="normal" textLength="20.2" lengthAdjust="spacingAndGlyphs" stroke="#000" stroke-width="0.250" >4.00</text><path d="M275.5 218.5H281" stroke="#3cc83c" stroke-width="1.300"/><text x="273.5" y="222.5" text-anchor="end" font-size="13" font-weight="normal" textLength="20.2" lengthAdjust="spacingAndGlyphs" stroke="#000" stroke-width="0.250" >2.00</text><path d="M275.5 239.5H281" stroke="#3cc83c" stroke-width="1.300"/><text x="273.5" y="243.5" text-anchor="end" font-size="13" font-weight="normal" textLength="20.2" lengthAdjust="spacingAndGlyphs" stroke="#000" stroke-width="0.250" >0.00</text><path d="M275.5 259.5H281" stroke="#3cc83c" stroke-width="1.300"/><text x="273.5" y="263.5" text-anchor="end" font-size="13" font-weight="normal" textLength="26.3" lengthAdjust="spacingAndGlyphs" stroke="#000" stroke-width="0.250" >−2.00</text><path d="M275.5 279.5H281" stroke="#3cc83c" stroke-width="1.300"/><text x="273.5" y="283.5" text-anchor="end" font-size="13" font-weight="normal" textLength="26.3" lengthAdjust="spacingAndGlyphs" stroke="#000" stroke-width="0.250" >−4.00</text><path d="M275.5 294.5H281" stroke="#3cc83c" stroke-width="1.300"/><text x="273.5" y="298.5" text-anchor="end" font-size="13" font-weight="normal" textLength="26.3" lengthAdjust="spacingAndGlyphs" stroke="#000" stroke-width="0.250" >−5.45</text><text x="282" y="311" text-anchor="middle" font-size="13" font-weight="normal" textLength="20.2" lengthAdjust="spacingAndGlyphs" stroke="#000" stroke-width="0.250" >0.00</text><text x="368" y="311" text-anchor="middle" font-size="13" font-weight="normal" textLength="20.2" lengthAdjust="spacingAndGlyphs" stroke="#000" stroke-width="0.250" >0.01</text><text x="453" y="311" text-anchor="middle" font-size="13" font-weight="normal" textLength="20.2" lengthAdjust="spacingAndGlyphs" stroke="#000" stroke-width="0.250" >0.02</text><text x="538" y="311" text-anchor="middle" font-size="13" font-weight="normal" textLength="20.2" lengthAdjust="spacingAndGlyphs" stroke="#000" stroke-width="0.250" >0.03</text><text x="573" y="311" text-anchor="middle" font-size="13" font-weight="normal" textLength="20.2" lengthAdjust="spacingAndGlyphs" stroke="#000" stroke-width="0.250" >0.03</text><path d="M262.0 293.0 L299.2 201.5 L299.6 188.0 L302.5 180.0 L303.3 135.0 L303.3 178.0 L304.3 135.0 L305.3 135.0 L305.6 187.0 L306.0 186.2 L306.4 170.8 L306.7 184.9 L307.1 170.7 L307.5 183.5 L307.8 169.4 L308.2 182.2 L308.6 168.0 L309.0 180.9 L309.3 166.6 L309.7 179.6 L310.1 165.2 L310.5 178.2 L310.8 163.9 L311.2 176.9 L311.5 162.5 L311.9 175.6 L312.3 161.6 L312.7 174.3 L313.0 160.9 L313.4 173.4 L313.8 160.1 L314.2 172.9 L314.5 159.3 L314.9 172.4 L315.3 158.5 L315.6 171.9 L316.0 157.8 L316.4 171.4 L316.7 157.0 L317.1 170.9 L317.5 156.2 L317.9 170.4 L318.2 155.4 L318.6 170.0 L319.0 154.5 L319.4 169.5 L319.7 153.6 L320.1 169.0 L320.5 152.7 L320.8 168.5 L321.2 151.8 L321.6 168.0 L321.9 150.9 L322.3 167.0 L322.7 150.0 L323.1 165.6 L323.4 149.1 L323.8 164.1 L324.2 146.2 L324.6 162.7 L324.9 142.5 L325.3 161.2 L325.7 138.8 L325.5 135.0 L325.9 176.0 L326.8 135.0 L327.9 135.0 L328.2 176.0 L328.7 188.0 L329.3 179.0 L330.5 178.4 L334.0 184.0 L339.0 195.5 L345.0 209.0 L351.0 224.0 L356.0 237.0 L360.0 248.0 L363.0 257.0 L366.0 266.0 L368.0 259.0 L370.5 252.5 L373.0 250.5 L375.6 249.0 L378.0 252.0 L381.0 256.0 L384.0 258.5 L387.0 261.0 L390.0 263.0 L396.0 265.0 L398.0 272.0 L401.0 285.0 L403.5 293.0 L440.7 201.5 L441.1 188.0 L444.0 180.0 L444.8 135.0 L444.8 178.0 L445.8 135.0 L446.8 135.0 L447.1 187.0 L447.5 186.2 L447.9 170.8 L448.2 184.9 L448.6 170.7 L449.0 183.5 L449.3 169.4 L449.7 182.2 L450.1 168.0 L450.5 180.9 L450.8 166.6 L451.2 179.6 L451.6 165.2 L452.0 178.2 L452.3 163.9 L452.7 176.9 L453.0 162.5 L453.4 175.6 L453.8 161.6 L454.2 174.3 L454.5 160.9 L454.9 173.4 L455.3 160.1 L455.7 172.9 L456.0 159.3 L456.4 172.4 L456.8 158.5 L457.1 171.9 L457.5 157.8 L457.9 171.4 L458.2 157.0 L458.6 170.9 L459.0 156.2 L459.4 170.4 L459.7 155.4 L460.1 170.0 L460.5 154.5 L460.9 169.5 L461.2 153.6 L461.6 169.0 L462.0 152.7 L462.3 168.5 L462.7 151.8 L463.1 168.0 L463.4 150.9 L463.8 167.0 L464.2 150.0 L464.6 165.6 L464.9 149.1 L465.3 164.1 L465.7 146.2 L466.1 162.7 L466.4 142.5 L466.8 161.2 L467.2 138.8 L467.0 135.0 L467.4 176.0 L468.3 135.0 L469.4 135.0 L469.7 176.0 L470.2 188.0 L470.8 179.0 L472.0 178.4 L475.5 184.0 L480.5 195.5 L486.5 209.0 L492.5 224.0 L497.5 237.0 L501.5 248.0 L504.5 257.0 L507.5 266.0 L509.5 259.0 L512.0 252.5 L514.5 250.5 L517.1 249.0 L519.5 252.0 L522.5 256.0 L525.5 258.5 L528.5 261.0 L531.5 263.0 L537.5 265.0 L539.5 272.0 L542.5 285.0 L545.0 293.0 L582.2 201.5 L582.6 188.0 L585.5 180.0 L586.3 135.0 L586.3 178.0 L587.3 135.0 L588.3 135.0 L588.6 187.0 L589.0 186.2 L589.4 170.8 L589.7 184.9 L590.1 170.7 L590.5 183.5 L590.8 169.4 L591.2 182.2 L591.6 168.0 L592.0 180.9 L592.3 166.6 L592.7 179.6 L593.1 165.2 L593.5 178.2 L593.8 163.9 L594.2 176.9 L594.5 162.5 L594.9 175.6 L595.3 161.6 L595.7 174.3 L596.0 160.9 L596.4 173.4 L596.8 160.1 L597.2 172.9 L597.5 159.3 L597.9 172.4 L598.3 158.5 L598.6 171.9 L599.0 157.8 L599.4 171.4 L599.7 157.0 L600.1 170.9 L600.5 156.2 L600.9 170.4 L601.2 155.4 L601.6 170.0 L602.0 154.5 L602.4 169.5 L602.7 153.6 L603.1 169.0 L603.5 152.7 L603.8 168.5 L604.2 151.8 L604.6 168.0 L604.9 150.9 L605.3 167.0 L605.7 150.0 L606.1 165.6 L606.4 149.1 L606.8 164.1 L607.2 146.2 L607.6 162.7 L607.9 142.5 L608.3 161.2 L608.7 138.8 L608.5 135.0 L608.9 176.0 L609.8 135.0 L610.9 135.0 L611.2 176.0 L611.7 188.0 L612.3 179.0 L613.5 178.4 L617.0 184.0 L622.0 195.5 L628.0 209.0 L634.0 224.0 L639.0 237.0 L643.0 248.0 L646.0 257.0 L649.0 266.0 L651.0 259.0 L653.5 252.5 L656.0 250.5 L658.6 249.0 L661.0 252.0 L664.0 256.0 L667.0 258.5 L670.0 261.0 L673.0 263.0 L679.0 265.0 L681.0 272.0 L684.0 285.0 L686.5 293.0" fill="none" stroke="#e40a0a" stroke-width="2" stroke-linejoin="round" clip-path="url(#c1)"/><rect x="649" y="136" width="293" height="159" fill="#fbfffb"/><path d="M649.5 136V295M657.5 136V295M665.5 136V295M673.5 136V295M681.5 136V295M688.5 136V295M696.5 136V295M704.5 136V295M712.5 136V295M720.5 136V295M728.5 136V295M736.5 136V295M744.5 136V295M751.5 136V295M759.5 136V295M767.5 136V295M775.5 136V295M783.5 136V295M791.5 136V295M799.5 136V295M807.5 136V295M814.5 136V295M822.5 136V295M830.5 136V295M838.5 136V295M846.5 136V295M854.5 136V295M862.5 136V295M870.5 136V295M878.5 136V295M885.5 136V295M893.5 136V295M901.5 136V295M909.5 136V295M917.5 136V295M925.5 136V295M933.5 136V295M941.5 136V295" stroke="#c6f3f6" stroke-width="1" fill="none"/><path d="M649.5 136V295M728.5 136V295M807.5 136V295M886.5 136V295" stroke="#90ecf2" stroke-width="1" fill="none"/><path d="M649 140.5H942M649 146.5H942M649 152.5H942M649 158.5H942M649 164.5H942M649 170.5H942M649 176.5H942M649 182.5H942M649 188.5H942M649 195.5H942M649 201.5H942M649 207.5H942M649 213.5H942M649 219.5H942M649 225.5H942M649 231.5H942M649 237.5H942M649 243.5H942M649 249.5H942M649 256.5H942M649 262.5H942M649 268.5H942M649 274.5H942M649 280.5H942M649 286.5H942M649 292.5H942" stroke="#b6ecb6" stroke-width="1" fill="none"/><path d="M649 158.5H942M649 188.5H942M649 219.5H942M649 250.5H942M649 280.5H942" stroke="#4ccc4c" stroke-width="1.200" fill="none"/><path d="M649.500 295V136.500H942" fill="none" stroke="#4a90a8" stroke-width="1"/><path d="M642.5 136.5H648" stroke="#3cc83c" stroke-width="1.300"/><text x="640.5" y="140.5" text-anchor="end" font-size="13" font-weight="normal" textLength="20.2" lengthAdjust="spacingAndGlyphs" stroke="#000" stroke-width="0.250" >0.03</text><path d="M642.5 158.5H648" stroke="#3cc83c" stroke-width="1.300"/><text x="640.5" y="162.5" text-anchor="end" font-size="13" font-weight="normal" textLength="20.2" lengthAdjust="spacingAndGlyphs" stroke="#000" stroke-width="0.250" >0.02</text><path d="M642.5 189.5H648" stroke="#3cc83c" stroke-width="1.300"/><text x="640.5" y="193.5" text-anchor="end" font-size="13" font-weight="normal" textLength="20.2" lengthAdjust="spacingAndGlyphs" stroke="#000" stroke-width="0.250" >0.01</text><path d="M642.5 219.5H648" stroke="#3cc83c" stroke-width="1.300"/><text x="640.5" y="223.5" text-anchor="end" font-size="13" font-weight="normal" textLength="20.2" lengthAdjust="spacingAndGlyphs" stroke="#000" stroke-width="0.250" >0.00</text><path d="M642.5 250.5H648" stroke="#3cc83c" stroke-width="1.300"/><text x="640.5" y="254.5" text-anchor="end" font-size="13" font-weight="normal" textLength="26.3" lengthAdjust="spacingAndGlyphs" stroke="#000" stroke-width="0.250" >−0.01</text><path d="M642.5 280.5H648" stroke="#3cc83c" stroke-width="1.300"/><text x="640.5" y="284.5" text-anchor="end" font-size="13" font-weight="normal" textLength="26.3" lengthAdjust="spacingAndGlyphs" stroke="#000" stroke-width="0.250" >−0.02</text><path d="M642.5 294.5H648" stroke="#3cc83c" stroke-width="1.300"/><text x="640.5" y="298.5" text-anchor="end" font-size="13" font-weight="normal" textLength="26.3" lengthAdjust="spacingAndGlyphs" stroke="#000" stroke-width="0.250" >−0.02</text><text x="649" y="311" text-anchor="middle" font-size="13" font-weight="normal" textLength="20.2" lengthAdjust="spacingAndGlyphs" stroke="#000" stroke-width="0.250" >0.00</text><text x="729" y="311" text-anchor="middle" font-size="13" font-weight="normal" textLength="20.2" lengthAdjust="spacingAndGlyphs" stroke="#000" stroke-width="0.250" >0.01</text><text x="807" y="311" text-anchor="middle" font-size="13" font-weight="normal" textLength="20.2" lengthAdjust="spacingAndGlyphs" stroke="#000" stroke-width="0.250" >0.02</text><text x="885" y="311" text-anchor="middle" font-size="13" font-weight="normal" textLength="20.2" lengthAdjust="spacingAndGlyphs" stroke="#000" stroke-width="0.250" >0.03</text><text x="939" y="311" text-anchor="middle" font-size="13" font-weight="normal" textLength="20.2" lengthAdjust="spacingAndGlyphs" stroke="#000" stroke-width="0.250" >0.04</text><path d="M640.0 212.0 L660.0 212.0 L661.0 218.6 L672.6 218.6 L674.5 190.0 L676.5 160.0 L678.0 137.0 L680.0 137.0 L681.5 165.0 L683.0 200.0 L684.3 229.0 L685.0 221.0 L685.6 233.6 L686.2 222.0 L686.8 232.0 L687.6 227.0 L721.5 227.0 L722.4 219.0 L738.0 219.0 L740.0 245.0 L742.0 275.0 L743.4 294.5 L745.5 294.5 L747.0 265.0 L748.5 230.0 L750.0 197.0 L751.5 218.0 L752.5 205.0 L753.2 212.0 L754.0 204.5 L754.8 212.0 L755.6 204.5 L756.4 212.0 L757.2 205.0 L758.0 212.0 L767.3 212.0 L768.0 204.5 L768.7 212.0 L791.3 212.0 L791.3 212.0 L792.3 218.6 L803.9 218.6 L805.8 190.0 L807.8 160.0 L809.3 137.0 L811.3 137.0 L812.8 165.0 L814.3 200.0 L815.6 229.0 L816.3 221.0 L816.9 233.6 L817.5 222.0 L818.1 232.0 L818.9 227.0 L852.8 227.0 L853.7 219.0 L869.3 219.0 L871.3 245.0 L873.3 275.0 L874.7 294.5 L876.8 294.5 L878.3 265.0 L879.8 230.0 L881.3 197.0 L882.8 218.0 L883.8 205.0 L884.5 212.0 L885.3 204.5 L886.1 212.0 L886.9 204.5 L887.7 212.0 L888.5 205.0 L889.3 212.0 L898.6 212.0 L899.3 204.5 L900.0 212.0 L922.6 212.0 L922.6 212.0 L923.6 218.6 L935.2 218.6 L937.1 190.0 L939.1 160.0 L940.6 137.0 L942.6 137.0 L944.1 165.0 L945.6 200.0 L946.9 229.0 L947.6 221.0 L948.2 233.6 L948.8 222.0 L949.4 232.0 L950.2 227.0 L984.1 227.0 L985.0 219.0 L1000.6 219.0 L1002.6 245.0 L1004.6 275.0 L1006.0 294.5 L1008.1 294.5 L1009.6 265.0 L1011.1 230.0 L1012.6 197.0 L1014.1 218.0 L1015.1 205.0 L1015.8 212.0 L1016.6 204.5 L1017.4 212.0 L1018.2 204.5 L1019.0 212.0 L1019.8 205.0 L1020.6 212.0 L1029.9 212.0 L1030.6 204.5 L1031.3 212.0 L1053.9 212.0" fill="none" stroke="#e40a0a" stroke-width="2.200" stroke-linejoin="round" clip-path="url(#c2)"/><rect x="280" y="323" width="293" height="188" fill="#fbfffb"/><path d="M280.5 323V511M287.5 323V511M294.5 323V511M301.5 323V511M308.5 323V511M316.5 323V511M323.5 323V511M330.5 323V511M337.5 323V511M344.5 323V511M351.5 323V511M358.5 323V511M366.5 323V511M373.5 323V511M380.5 323V511M387.5 323V511M394.5 323V511M401.5 323V511M408.5 323V511M415.5 323V511M422.5 323V511M430.5 323V511M437.5 323V511M444.5 323V511M451.5 323V511M458.5 323V511M465.5 323V511M472.5 323V511M480.5 323V511M487.5 323V511M494.5 323V511M501.5 323V511M508.5 323V511M515.5 323V511M522.5 323V511M529.5 323V511M536.5 323V511M544.5 323V511M551.5 323V511M558.5 323V511M565.5 323V511M572.5 323V511" stroke="#c6f3f6" stroke-width="1" fill="none"/><path d="M280.5 323V511M337.5 323V511M394.5 323V511M451.5 323V511M508.5 323V511M565.5 323V511" stroke="#90ecf2" stroke-width="1" fill="none"/><path d="M280 323.5H573M280 328.5H573M280 334.5H573M280 339.5H573M280 344.5H573M280 349.5H573M280 354.5H573M280 359.5H573M280 364.5H573M280 369.5H573M280 374.5H573M280 380.5H573M280 385.5H573M280 390.5H573M280 395.5H573M280 400.5H573M280 405.5H573M280 410.5H573M280 415.5H573M280 421.5H573M280 426.5H573M280 431.5H573M280 436.5H573M280 441.5H573M280 446.5H573M280 451.5H573M280 456.5H573M280 462.5H573M280 467.5H573M280 472.5H573M280 477.5H573M280 482.5H573M280 487.5H573M280 492.5H573M280 497.5H573M280 502.5H573M280 508.5H573" stroke="#b6ecb6" stroke-width="1" fill="none"/><path d="M280 328.5H573M280 354.5H573M280 380.5H573M280 405.5H573M280 431.5H573M280 456.5H573M280 482.5H573M280 508.5H573" stroke="#4ccc4c" stroke-width="1.200" fill="none"/><path d="M280.500 511V323.500H573" fill="none" stroke="#2858a0" stroke-width="1.300"/><path d="M273.5 323.5H279" stroke="#3cc83c" stroke-width="1.300"/><text x="271.5" y="327.5" text-anchor="end" font-size="13" font-weight="normal" textLength="20.2" lengthAdjust="spacingAndGlyphs" stroke="#000" stroke-width="0.250" >11.7</text><path d="M273.5 354.5H279" stroke="#3cc83c" stroke-width="1.300"/><text x="271.5" y="358.5" text-anchor="end" font-size="13" font-weight="normal" textLength="14.5" lengthAdjust="spacingAndGlyphs" stroke="#000" stroke-width="0.250" >0.0</text><path d="M273.5 380.5H279" stroke="#3cc83c" stroke-width="1.300"/><text x="271.5" y="384.5" text-anchor="end" font-size="13" font-weight="normal" textLength="26.3" lengthAdjust="spacingAndGlyphs" stroke="#000" stroke-width="0.250" >−10.0</text><path d="M273.5 405.5H279" stroke="#3cc83c" stroke-width="1.300"/><text x="271.5" y="409.5" text-anchor="end" font-size="13" font-weight="normal" textLength="26.3" lengthAdjust="spacingAndGlyphs" stroke="#000" stroke-width="0.250" >−20.0</text><path d="M273.5 431.5H279" stroke="#3cc83c" stroke-width="1.300"/><text x="271.5" y="435.5" text-anchor="end" font-size="13" font-weight="normal" textLength="26.3" lengthAdjust="spacingAndGlyphs" stroke="#000" stroke-width="0.250" >−30.0</text><path d="M273.5 457.5H279" stroke="#3cc83c" stroke-width="1.300"/><text x="271.5" y="461.5" text-anchor="end" font-size="13" font-weight="normal" textLength="26.3" lengthAdjust="spacingAndGlyphs" stroke="#000" stroke-width="0.250" >−40.0</text><path d="M273.5 482.5H279" stroke="#3cc83c" stroke-width="1.300"/><text x="271.5" y="486.5" text-anchor="end" font-size="13" font-weight="normal" textLength="26.3" lengthAdjust="spacingAndGlyphs" stroke="#000" stroke-width="0.250" >−50.0</text><path d="M273.5 510.5H279" stroke="#3cc83c" stroke-width="1.300"/><text x="271.5" y="514.5" text-anchor="end" font-size="13" font-weight="normal" textLength="26.3" lengthAdjust="spacingAndGlyphs" stroke="#000" stroke-width="0.250" >−61.3</text><text x="280" y="527" text-anchor="middle" font-size="13" font-weight="normal" textLength="14.5" lengthAdjust="spacingAndGlyphs" stroke="#000" stroke-width="0.250" >0.0</text><text x="337" y="527" text-anchor="middle" font-size="13" font-weight="normal" textLength="37.6" lengthAdjust="spacingAndGlyphs" stroke="#000" stroke-width="0.250" >20000.0</text><text x="394" y="527" text-anchor="middle" font-size="13" font-weight="normal" textLength="37.6" lengthAdjust="spacingAndGlyphs" stroke="#000" stroke-width="0.250" >40000.0</text><text x="451.5" y="527" text-anchor="middle" font-size="13" font-weight="normal" textLength="37.6" lengthAdjust="spacingAndGlyphs" stroke="#000" stroke-width="0.250" >60000.0</text><text x="507.5" y="527" text-anchor="middle" font-size="13" font-weight="normal" textLength="37.6" lengthAdjust="spacingAndGlyphs" stroke="#000" stroke-width="0.250" >80000.0</text><text x="592" y="527" text-anchor="end" font-size="13" font-weight="normal" textLength="43.4" lengthAdjust="spacingAndGlyphs" stroke="#000" stroke-width="0.250" >102011.7</text><path d="M280.0 322.7 L280.2 324.2 L280.5 322.5 L280.8 324.2 L281.0 353.6 L281.2 355.2 L281.5 373.0 L281.8 395.2 L282.0 382.0 L282.2 403.4 L282.5 409.6 L282.8 427.1 L283.0 410.1 L283.2 431.8 L283.5 417.5 L283.8 435.6 L284.0 419.1 L284.2 431.1 L284.5 421.2 L284.8 442.3 L285.0 422.8 L285.2 448.2 L285.5 423.8 L285.8 444.6 L286.0 424.8 L286.2 442.4 L286.5 432.0 L286.8 453.7 L287.0 430.3 L287.2 448.0 L287.5 434.0 L287.8 450.3 L288.0 434.0 L288.2 458.1 L288.5 432.8 L288.8 459.2 L289.0 436.2 L289.2 452.8 L289.5 434.2 L289.8 461.4 L290.0 436.7 L290.2 454.2 L290.5 438.3 L290.8 455.5 L291.0 436.5 L291.2 463.7 L291.5 437.4 L291.8 457.8 L292.0 442.0 L292.2 462.2 L292.5 444.6 L292.8 460.9 L293.0 439.4 L293.2 458.3 L293.5 437.8 L293.8 460.7 L294.0 443.9 L294.2 456.5 L294.5 446.7 L294.8 458.4 L295.0 442.5 L295.2 458.5 L295.5 440.9 L295.8 460.7 L296.0 441.2 L296.2 462.0 L296.5 444.8 L296.8 465.5 L297.0 445.0 L297.2 465.7 L297.5 446.0 L297.8 464.2 L298.0 449.0 L298.2 463.5 L298.5 447.8 L298.8 467.4 L299.0 449.9 L299.2 468.9 L299.5 449.4 L299.8 470.7 L300.0 450.4 L300.2 470.0 L300.5 451.7 L300.8 471.7 L301.0 453.5 L301.2 463.6 L301.5 444.8 L301.8 464.7 L302.0 453.8 L302.2 458.7 L302.5 444.6 L302.8 449.0 L303.0 434.7 L303.2 439.1 L303.5 424.8 L303.8 429.2 L304.0 412.7 L304.2 416.6 L304.5 410.5 L304.8 414.2 L305.0 421.0 L305.2 425.5 L305.5 432.2 L305.8 438.1 L306.0 439.5 L306.2 444.5 L306.5 448.5 L306.8 455.3 L307.0 452.3 L307.2 461.3 L307.5 454.1 L307.8 468.3 L308.0 455.6 L308.2 465.6 L308.5 454.4 L308.8 471.3 L309.0 459.0 L309.2 468.8 L309.5 459.7 L309.8 470.7 L310.0 460.3 L310.2 472.8 L310.5 463.4 L310.8 471.0 L311.0 460.6 L311.2 480.4 L311.5 460.8 L311.8 480.6 L312.0 462.7 L312.2 480.5 L312.5 464.7 L312.8 476.8 L313.0 467.1 L313.2 475.6 L313.5 467.4 L313.8 488.6 L314.0 464.3 L314.2 481.9 L314.5 465.0 L314.8 484.2 L315.0 470.9 L315.2 483.6 L315.5 469.8 L315.8 483.6 L316.0 469.8 L316.2 486.4 L316.5 470.9 L316.8 481.6 L317.0 470.7 L317.2 486.5 L317.5 473.0 L317.8 485.1 L318.0 473.8 L318.2 487.8 L318.5 470.6 L318.8 495.1 L319.0 472.3 L319.2 496.1 L319.5 475.1 L319.8 485.6 L320.0 473.5 L320.2 489.5 L320.5 476.7 L320.8 485.4 L321.0 475.9 L321.2 485.7 L321.5 470.6 L321.8 485.9 L322.0 474.7 L322.2 488.3 L322.5 472.3 L322.8 491.0 L323.0 475.8 L323.2 488.6 L323.5 473.2 L323.8 492.5 L324.0 476.8 L324.2 487.3 L324.5 473.0 L324.8 493.3 L325.0 471.6 L325.2 491.9 L325.5 474.9 L325.8 490.7 L326.0 474.6 L326.2 492.7 L326.5 476.0 L326.8 491.3 L327.0 477.4 L327.2 490.3 L327.5 471.7 L327.8 495.6 L328.0 471.9 L328.2 494.4 L328.5 475.3 L328.8 488.2 L329.0 474.2 L329.2 496.0 L329.5 474.4 L329.8 494.7 L330.0 478.9 L330.2 500.0 L330.5 478.8 L330.8 502.1 L331.0 479.5 L331.2 489.3 L331.5 479.1 L331.8 488.9 L332.0 479.9 L332.2 497.2 L332.5 474.9 L332.8 498.6 L333.0 475.4 L333.2 489.9 L333.5 477.8 L333.8 496.8 L334.0 476.4 L334.2 499.3 L334.5 479.8 L334.8 495.9 L335.0 480.7 L335.2 492.4 L335.5 478.2 L335.8 498.3 L336.0 480.3 L336.2 495.1 L336.5 480.2 L336.8 492.3 L337.0 476.4 L337.2 495.8 L337.5 482.6 L337.8 498.8 L338.0 479.1 L338.2 497.3 L338.5 479.6 L338.8 501.3 L339.0 483.9 L339.2 500.1 L339.5 481.0 L339.8 497.4 L340.0 483.7 L340.2 495.9 L340.5 481.0 L340.8 496.6 L341.0 480.5 L341.2 503.1 L341.5 480.6 L341.8 498.1 L342.0 481.8 L342.2 496.9 L342.5 486.2 L342.8 499.3 L343.0 485.3 L343.2 498.3 L343.5 481.2 L343.8 496.5 L344.0 483.6 L344.2 501.2 L344.5 481.2 L344.8 503.6 L345.0 484.1 L345.2 502.9 L345.5 484.7 L345.8 503.1 L346.0 484.2 L346.2 498.1 L346.5 482.4 L346.8 502.5 L347.0 481.5 L347.2 498.3 L347.5 485.9 L347.8 497.8 L348.0 481.5 L348.2 504.8 L348.5 481.5 L348.8 499.1 L349.0 482.5 L349.2 496.9 L349.5 481.7 L349.8 498.9 L350.0 486.8 L350.2 505.1 L350.5 487.9 L350.8 497.3 L351.0 488.5 L351.2 498.2 L351.5 487.7 L351.8 498.0 L352.0 488.3 L352.2 498.8 L352.5 485.5 L352.8 500.3 L353.0 485.3 L353.2 497.0 L353.5 486.2 L353.8 496.6 L354.0 486.7 L354.2 499.8 L354.5 486.3 L354.8 500.8 L355.0 487.3 L355.2 495.6 L355.5 488.2 L355.8 499.4 L356.0 487.3 L356.2 496.1 L356.5 487.0 L356.8 496.1 L357.0 486.9 L357.2 495.8 L357.5 489.4 L357.8 497.2 L358.0 487.3 L358.2 498.6 L358.5 488.0 L358.8 497.1 L359.0 489.8 L359.2 499.7 L359.5 487.7 L359.8 499.9 L360.0 489.0 L360.2 497.7 L360.5 490.1 L360.8 498.5 L361.0 486.8 L361.2 497.6 L361.5 488.5 L361.8 498.8 L362.0 488.8 L362.2 500.8 L362.5 489.2 L362.8 496.2 L363.0 486.9 L363.2 500.1 L363.5 489.7 L363.8 498.3 L364.0 486.9 L364.2 500.3 L364.5 490.0 L364.8 498.2 L365.0 488.3 L365.2 499.3 L365.5 489.6 L365.8 507.1 L366.0 487.1 L366.2 501.4 L366.5 489.1 L366.8 499.4 L367.0 488.0 L367.2 502.0 L367.5 489.6 L367.8 501.4 L368.0 488.3 L368.2 507.0 L368.5 487.6 L368.8 500.3 L369.0 488.8 L369.2 499.1 L369.5 488.8 L369.8 496.6 L370.0 488.4 L370.2 499.2 L370.5 487.0 L370.8 502.0 L371.0 487.8 L371.2 500.4 L371.5 489.9 L371.8 498.1 L372.0 489.2 L372.2 502.5 L372.5 487.7 L372.8 501.1 L373.0 487.8 L373.2 500.6 L373.5 488.6 L373.8 501.5 L374.0 488.2 L374.2 502.8 L374.5 490.0 L374.8 501.8 L375.0 491.6 L375.2 497.5 L375.5 491.3 L375.8 498.3 L376.0 489.0 L376.2 500.7 L376.5 489.3 L376.8 499.3 L377.0 488.9 L377.2 500.0 L377.5 488.3 L377.8 502.0 L378.0 490.8 L378.2 500.9 L378.5 491.6 L378.8 497.8 L379.0 489.1 L379.2 498.7 L379.5 491.9 L379.8 499.2 L380.0 491.0 L380.2 505.4 L380.5 492.4 L380.8 499.1 L381.0 492.7 L381.2 498.3 L381.5 491.2 L381.8 502.5 L382.0 491.3 L382.2 507.1 L382.5 488.8 L382.8 499.7 L383.0 491.1 L383.2 499.4 L383.5 491.8 L383.8 499.2 L384.0 490.1 L384.2 500.2 L384.5 491.4 L384.8 504.4 L385.0 492.4 L385.2 500.3 L385.5 490.7 L385.8 500.9 L386.0 490.6 L386.2 504.8 L386.5 493.8 L386.8 499.1 L387.0 493.1 L387.2 499.2 L387.5 490.9 L387.8 504.6 L388.0 489.5 L388.2 502.1 L388.5 489.8 L388.8 511.4 L389.0 492.7 L389.2 503.0 L389.5 493.8 L389.8 501.1 L390.0 493.8 L390.2 501.8 L390.5 491.2 L390.8 505.1 L391.0 490.9 L391.2 503.9 L391.5 491.7 L391.8 505.1 L392.0 492.4 L392.2 500.8 L392.5 492.1 L392.8 501.1 L393.0 491.0 L393.2 503.1 L393.5 492.5 L393.8 502.4 L394.0 491.0 L394.2 499.5 L394.5 490.8 L394.8 503.6 L395.0 493.2 L395.2 504.6 L395.5 490.2 L395.8 504.8 L396.0 490.2 L396.2 503.9 L396.5 492.6 L396.8 499.9 L397.0 489.9 L397.2 500.1 L397.5 493.8 L397.8 499.9 L398.0 493.2 L398.2 499.7 L398.5 491.3 L398.8 509.4 L399.0 493.2 L399.2 505.4 L399.5 491.7 L399.8 502.0 L400.0 491.5 L400.2 504.3 L400.5 493.4 L400.8 500.5 L401.0 490.5 L401.2 506.5 L401.5 489.8 L401.8 500.6 L402.0 493.9 L402.2 502.3 L402.5 490.5 L402.8 503.2 L403.0 490.8 L403.2 504.8 L403.5 491.5 L403.8 502.1 L404.0 490.4 L404.2 503.1 L404.5 493.3 L404.8 502.7 L405.0 490.9 L405.2 499.9 L405.5 492.1 L405.8 499.8 L406.0 490.9 L406.2 502.0 L406.5 491.5 L406.8 500.7 L407.0 489.7 L407.2 501.5 L407.5 493.9 L407.8 500.7 L408.0 490.0 L408.2 503.9 L408.5 489.0 L408.8 502.4 L409.0 490.3 L409.2 500.4 L409.5 487.8 L409.8 502.9 L410.0 490.7 L410.2 496.3 L410.5 489.6 L410.8 495.2 L411.0 490.5 L411.2 493.8 L411.5 487.9 L411.8 492.7 L412.0 486.1 L412.2 491.0 L412.5 482.8 L412.8 487.4 L413.0 479.6 L413.2 484.8 L413.5 479.3 L413.8 483.8 L414.0 482.4 L414.2 487.6 L414.5 483.2 L414.8 491.0 L415.0 487.4 L415.2 491.3 L415.5 489.9 L415.8 495.1 L416.0 491.7 L416.2 497.7 L416.5 493.0 L416.8 499.3 L417.0 492.7 L417.2 501.1 L417.5 494.3 L417.8 500.6 L418.0 492.0 L418.2 501.0 L418.5 493.8 L418.8 505.1 L419.0 490.3 L419.2 505.5 L419.5 495.1 L419.8 508.2 L420.0 493.3 L420.2 503.0 L420.5 493.0 L420.8 501.6 L421.0 494.7 L421.2 506.4 L421.5 494.8 L421.8 501.7 L422.0 493.3 L422.2 506.0 L422.5 492.6 L422.8 503.5 L423.0 493.1 L423.2 507.2 L423.5 492.9 L423.8 505.9 L424.0 496.3 L424.2 502.6 L424.5 493.0 L424.8 508.6 L425.0 494.4 L425.2 508.9 L425.5 494.9 L425.8 505.8 L426.0 497.2 L426.2 504.6 L426.5 493.2 L426.8 506.9 L427.0 496.4 L427.2 506.4 L427.5 495.9 L427.8 509.6 L428.0 496.6 L428.2 506.9 L428.5 494.0 L428.8 508.9 L429.0 495.2 L429.2 503.7 L429.5 495.5 L429.8 506.7 L430.0 494.8 L430.2 509.5 L430.5 495.0 L430.8 506.0 L431.0 494.0 L431.2 509.9 L431.5 497.4 L431.8 509.6 L432.0 496.5 L432.2 509.1 L432.5 497.1 L432.8 509.9 L433.0 496.9 L433.2 506.3 L433.5 497.8 L433.8 505.4 L434.0 498.1 L434.2 505.3 L434.5 498.1 L434.8 507.3 L435.0 494.5 L435.2 508.0 L435.5 498.5 L435.8 505.7 L436.0 498.2 L436.2 505.7 L436.5 497.3 L436.8 513.9 L437.0 497.5 L437.2 510.2 L437.5 494.3 L437.8 505.2 L438.0 495.4 L438.2 508.2 L438.5 498.4 L438.8 509.0 L439.0 497.8 L439.2 509.4 L439.5 498.5 L439.8 510.3 L440.0 496.9 L440.2 504.9 L440.5 494.0 L440.8 506.0 L441.0 498.2 L441.2 505.0 L441.5 494.5 L441.8 504.8 L442.0 494.4 L442.2 510.7 L442.5 497.7 L442.8 506.6 L443.0 496.6 L443.2 508.9 L443.5 498.9 L443.8 506.6 L444.0 495.2 L444.2 508.1 L444.5 496.4 L444.8 507.3 L445.0 495.1 L445.2 505.8 L445.5 494.6 L445.8 510.0 L446.0 494.5 L446.2 509.9 L446.5 497.9 L446.8 505.8 L447.0 494.5 L447.2 507.2 L447.5 498.7 L447.8 504.7 L448.0 495.4 L448.2 511.0 L448.5 496.7 L448.8 509.6 L449.0 496.7 L449.2 507.5 L449.5 496.4 L449.8 506.8 L450.0 497.6 L450.2 506.8 L450.5 496.5 L450.8 511.1 L451.0 495.3 L451.2 510.2 L451.5 494.7 L451.8 506.6 L452.0 497.1 L452.2 509.6 L452.5 496.4 L452.8 506.7 L453.0 497.3 L453.2 508.0 L453.5 495.3 L453.8 511.3 L454.0 497.5 L454.2 509.0 L454.5 497.6 L454.8 510.5 L455.0 499.4 L455.2 510.5 L455.5 494.9 L455.8 507.4 L456.0 497.1 L456.2 510.8 L456.5 495.5 L456.8 509.7 L457.0 498.3 L457.2 508.4 L457.5 498.0 L457.8 509.4 L458.0 497.0 L458.2 506.1 L458.5 498.0 L458.8 509.2 L459.0 499.5 L459.2 507.3 L459.5 499.7 L459.8 508.7 L460.0 497.3 L460.2 510.0 L460.5 495.9 L460.8 511.2 L461.0 496.7 L461.2 506.1 L461.5 498.2 L461.8 508.4 L462.0 498.6 L462.2 506.6 L462.5 497.1 L462.8 512.4 L463.0 498.4 L463.2 505.5 L463.5 499.2 L463.8 507.2 L464.0 497.6 L464.2 508.3 L464.5 496.9 L464.8 508.3 L465.0 495.4 L465.2 510.0 L465.5 498.0 L465.8 510.4 L466.0 499.9 L466.2 505.6 L466.5 498.2 L466.8 511.4 L467.0 498.6 L467.2 508.3 L467.5 496.0 L467.8 506.9 L468.0 499.9 L468.2 516.2 L468.5 495.8 L468.8 509.1 L469.0 499.9 L469.2 507.2 L469.5 496.2 L469.8 509.2 L470.0 495.6 L470.2 510.0 L470.5 499.4 L470.8 507.7 L471.0 499.8 L471.2 509.2 L471.5 498.7 L471.8 510.8 L472.0 496.3 L472.2 510.6 L472.5 500.2 L472.8 508.7 L473.0 499.6 L473.2 511.5 L473.5 496.6 L473.8 512.0 L474.0 496.2 L474.2 508.5 L474.5 499.7 L474.8 506.2 L475.0 498.8 L475.2 511.5 L475.5 500.4 L475.8 508.6 L476.0 499.8 L476.2 507.7 L476.5 497.3 L476.8 508.3 L477.0 499.7 L477.2 508.9 L477.5 499.6 L477.8 510.6 L478.0 497.5 L478.2 510.1 L478.5 497.2 L478.8 508.7 L479.0 497.9 L479.2 510.2 L479.5 499.6 L479.8 510.4 L480.0 497.6 L480.2 506.9 L480.5 495.1 L480.8 506.6 L481.0 494.5 L481.2 507.2 L481.5 490.6 L481.8 501.4 L482.0 488.5 L482.2 497.5 L482.5 492.3 L482.8 499.5 L483.0 494.4 L483.2 504.6 L483.5 495.3 L483.8 505.4 L484.0 497.4 L484.2 508.3 L484.5 500.3 L484.8 509.0 L485.0 500.4 L485.2 510.6 L485.5 499.5 L485.8 511.1 L486.0 498.7 L486.2 513.9 L486.5 499.0 L486.8 509.8 L487.0 499.8 L487.2 509.0 L487.5 498.9 L487.8 509.0 L488.0 501.3 L488.2 508.9 L488.5 498.9 L488.8 506.9 L489.0 500.9 L489.2 508.2 L489.5 501.3 L489.8 506.4 L490.0 501.0 L490.2 508.7 L490.5 501.4 L490.8 508.9 L491.0 498.4 L491.2 508.8 L491.5 501.5 L491.8 507.6 L492.0 498.1 L492.2 506.8 L492.5 500.0 L492.8 508.4 L493.0 498.1 L493.2 507.2 L493.5 499.9 L493.8 507.2 L494.0 498.0 L494.2 510.4 L494.5 498.4 L494.8 506.8 L495.0 499.0 L495.2 507.4 L495.5 498.1 L495.8 508.0 L496.0 501.3 L496.2 509.8 L496.5 500.0 L496.8 508.2 L497.0 499.1 L497.2 509.0 L497.5 500.3 L497.8 510.5 L498.0 499.9 L498.2 509.4 L498.5 501.8 L498.8 507.3 L499.0 501.2 L499.2 510.3 L499.5 498.3 L499.8 510.8 L500.0 500.6 L500.2 506.6 L500.5 499.2 L500.8 511.2 L501.0 501.5 L501.2 511.6 L501.5 500.2 L501.8 510.3 L502.0 500.0 L502.2 510.0 L502.5 501.5 L502.8 507.2 L503.0 498.7 L503.2 513.6 L503.5 501.9 L503.8 510.6 L504.0 500.4 L504.2 511.7 L504.5 501.2 L504.8 516.6 L505.0 501.1 L505.2 510.2 L505.5 502.1 L505.8 509.3 L506.0 498.5 L506.2 507.1 L506.5 500.8 L506.8 510.8 L507.0 499.7 L507.2 508.3 L507.5 500.5 L507.8 510.8 L508.0 501.4 L508.2 508.8 L508.5 501.1 L508.8 509.7 L509.0 500.0 L509.2 514.6 L509.5 502.3 L509.8 508.5 L510.0 500.2 L510.2 508.1 L510.5 500.0 L510.8 510.2 L511.0 500.4 L511.2 509.0 L511.5 502.2 L511.8 510.9 L512.0 502.1 L512.2 511.6 L512.5 500.0 L512.8 509.1 L513.0 498.6 L513.2 507.7 L513.5 498.6 L513.8 507.5 L514.0 500.6 L514.2 508.2 L514.5 500.9 L514.8 506.9 L515.0 502.5 L515.2 510.6 L515.5 499.0 L515.8 507.2 L516.0 501.4 L516.2 509.4 L516.5 501.4 L516.8 507.6 L517.0 502.3 L517.2 518.4 L517.5 498.8 L517.8 508.0 L518.0 499.7 L518.2 509.8 L518.5 500.7 L518.8 510.3 L519.0 500.0 L519.2 509.7 L519.5 502.7 L519.8 507.4 L520.0 499.1 L520.2 509.3 L520.5 500.5 L520.8 509.1 L521.0 500.4 L521.2 507.2 L521.5 499.9 L521.8 508.5 L522.0 501.8 L522.2 509.0 L522.5 499.9 L522.8 512.1 L523.0 502.0 L523.2 508.9 L523.5 501.9 L523.8 510.2 L524.0 501.9 L524.2 508.1 L524.5 502.1 L524.8 509.8 L525.0 499.4 L525.2 510.2 L525.5 501.2 L525.8 507.4 L526.0 499.9 L526.2 509.1 L526.5 501.8 L526.8 508.3 L527.0 502.1 L527.2 510.3 L527.5 500.0 L527.8 507.7 L528.0 500.9 L528.2 509.1 L528.5 501.1 L528.8 508.2 L529.0 500.3 L529.2 510.9 L529.5 502.0 L529.8 511.8 L530.0 500.0 L530.2 512.2 L530.5 499.7 L530.8 511.8 L531.0 500.4 L531.2 512.1 L531.5 499.4 L531.8 511.8 L532.0 502.2 L532.2 508.2 L532.5 501.1 L532.8 508.7 L533.0 499.1 L533.2 514.8 L533.5 499.0 L533.8 508.7 L534.0 498.9 L534.2 508.5 L534.5 499.2 L534.8 508.3 L535.0 499.0 L535.2 508.3 L535.5 501.4 L535.8 508.6 L536.0 500.6 L536.2 510.0 L536.5 500.7 L536.8 508.6 L537.0 499.0 L537.2 511.0 L537.5 502.4 L537.8 508.3 L538.0 502.0 L538.2 512.1 L538.5 499.1 L538.8 509.9 L539.0 501.0 L539.2 507.3 L539.5 501.6 L539.8 508.5 L540.0 501.8 L540.2 511.8 L540.5 500.0 L540.8 507.5 L541.0 501.0 L541.2 508.8 L541.5 500.3 L541.8 508.3 L542.0 500.3 L542.2 507.1 L542.5 501.2 L542.8 507.8 L543.0 502.1 L543.2 508.6 L543.5 501.0 L543.8 508.7 L544.0 500.6 L544.2 511.0 L544.5 499.5 L544.8 509.4 L545.0 501.9 L545.2 511.3 L545.5 501.0 L545.8 509.6 L546.0 501.1 L546.2 508.8 L546.5 502.5 L546.8 509.7 L547.0 500.6 L547.2 509.2 L547.5 499.7 L547.8 507.8 L548.0 502.0 L548.2 511.4 L548.5 499.4 L548.8 508.2 L549.0 500.4 L549.2 511.2 L549.5 499.0 L549.8 511.9 L550.0 501.0 L550.2 507.4 L550.5 500.7 L550.8 510.7 L551.0 498.5 L551.2 510.3 L551.5 500.3 L551.8 507.2 L552.0 502.1 L552.2 507.2 L552.5 501.3 L552.8 516.6 L553.0 501.6 L553.2 516.9 L553.5 500.4 L553.8 511.6 L554.0 499.6 L554.2 510.6 L554.5 499.4 L554.8 516.8 L555.0 501.6 L555.2 509.5 L555.5 501.5 L555.8 509.8 L556.0 499.0 L556.2 509.0 L556.5 499.7 L556.8 507.4 L557.0 499.2 L557.2 511.2 L557.5 501.4 L557.8 507.5 L558.0 500.6 L558.2 508.7 L558.5 499.6 L558.8 508.3 L559.0 499.3 L559.2 510.7 L559.5 502.0 L559.8 511.5 L560.0 500.0 L560.2 508.8 L560.5 500.6 L560.8 507.8 L561.0 500.9 L561.2 509.8 L561.5 498.6 L561.8 510.0 L562.0 499.7 L562.2 509.8 L562.5 500.3 L562.8 509.3 L563.0 499.0 L563.2 507.6 L563.5 501.1 L563.8 511.0 L564.0 500.3 L564.2 508.9 L564.5 501.4 L564.8 507.9 L565.0 500.0 L565.2 516.0 L565.5 501.5 L565.8 507.6 L566.0 500.4 L566.2 509.5 L566.5 499.6 L566.8 510.8 L567.0 502.2 L567.2 508.8 L567.5 502.0 L567.8 510.6 L568.0 501.0 L568.2 509.8 L568.5 500.2 L568.8 511.0 L569.0 500.8 L569.2 506.8 L569.5 500.7 L569.8 509.3 L570.0 502.1 L570.2 506.7 L570.5 501.8 L570.8 510.9 L571.0 501.2 L571.2 510.2 L571.5 501.9 L571.8 510.4 L572.0 498.2 L572.2 507.2" fill="none" stroke="#1040c8" stroke-width="1.100" clip-path="url(#c3)"/><rect x="648" y="323" width="292" height="188" fill="#fbfffb"/><path d="M648.5 323V511M655.5 323V511M662.5 323V511M670.5 323V511M677.5 323V511M684.5 323V511M691.5 323V511M699.5 323V511M706.5 323V511M713.5 323V511M720.5 323V511M728.5 323V511M735.5 323V511M742.5 323V511M749.5 323V511M756.5 323V511M764.5 323V511M771.5 323V511M778.5 323V511M785.5 323V511M793.5 323V511M800.5 323V511M807.5 323V511M814.5 323V511M822.5 323V511M829.5 323V511M836.5 323V511M843.5 323V511M850.5 323V511M858.5 323V511M865.5 323V511M872.5 323V511M879.5 323V511M887.5 323V511M894.5 323V511M901.5 323V511M908.5 323V511M916.5 323V511M923.5 323V511M930.5 323V511M937.5 323V511" stroke="#c6f3f6" stroke-width="1" fill="none"/><path d="M648.5 323V511M720.5 323V511M793.5 323V511M865.5 323V511M937.5 323V511" stroke="#90ecf2" stroke-width="1" fill="none"/><path d="M648 326.5H940M648 337.5H940M648 349.5H940M648 361.5H940M648 372.5H940M648 384.5H940M648 396.5H940M648 407.5H940M648 419.5H940M648 431.5H940M648 442.5H940M648 454.5H940M648 465.5H940M648 477.5H940M648 489.5H940M648 500.5H940" stroke="#b6ecb6" stroke-width="1" fill="none"/><path d="M648 326.5H940M648 349.5H940M648 372.5H940M648 396.5H940M648 419.5H940M648 442.5H940M648 466.5H940M648 489.5H940M648 512.5H940" stroke="#4ccc4c" stroke-width="1.200" fill="none"/><path d="M648.500 511V323.500H940" fill="none" stroke="#2858a0" stroke-width="1.300"/><path d="M641.5 323.5H647" stroke="#3cc83c" stroke-width="1.300"/><text x="639.5" y="327.5" text-anchor="end" font-size="13" font-weight="normal" textLength="26.3" lengthAdjust="spacingAndGlyphs" stroke="#000" stroke-width="0.250" >−49.5</text><path d="M641.5 349.5H647" stroke="#3cc83c" stroke-width="1.300"/><text x="639.5" y="353.5" text-anchor="end" font-size="13" font-weight="normal" textLength="26.3" lengthAdjust="spacingAndGlyphs" stroke="#000" stroke-width="0.250" >−55.0</text><path d="M641.5 372.5H647" stroke="#3cc83c" stroke-width="1.300"/><text x="639.5" y="376.5" text-anchor="end" font-size="13" font-weight="normal" textLength="26.3" lengthAdjust="spacingAndGlyphs" stroke="#000" stroke-width="0.250" >−60.0</text><path d="M641.5 395.5H647" stroke="#3cc83c" stroke-width="1.300"/><text x="639.5" y="399.5" text-anchor="end" font-size="13" font-weight="normal" textLength="26.3" lengthAdjust="spacingAndGlyphs" stroke="#000" stroke-width="0.250" >−65.0</text><path d="M641.5 418.5H647" stroke="#3cc83c" stroke-width="1.300"/><text x="639.5" y="422.5" text-anchor="end" font-size="13" font-weight="normal" textLength="26.3" lengthAdjust="spacingAndGlyphs" stroke="#000" stroke-width="0.250" >−70.0</text><path d="M641.5 442.5H647" stroke="#3cc83c" stroke-width="1.300"/><text x="639.5" y="446.5" text-anchor="end" font-size="13" font-weight="normal" textLength="26.3" lengthAdjust="spacingAndGlyphs" stroke="#000" stroke-width="0.250" >−75.0</text><path d="M641.5 465.5H647" stroke="#3cc83c" stroke-width="1.300"/><text x="639.5" y="469.5" text-anchor="end" font-size="13" font-weight="normal" textLength="26.3" lengthAdjust="spacingAndGlyphs" stroke="#000" stroke-width="0.250" >−80.0</text><path d="M641.5 489.5H647" stroke="#3cc83c" stroke-width="1.300"/><text x="639.5" y="493.5" text-anchor="end" font-size="13" font-weight="normal" textLength="26.3" lengthAdjust="spacingAndGlyphs" stroke="#000" stroke-width="0.250" >−85.0</text><path d="M641.5 510.5H647" stroke="#3cc83c" stroke-width="1.300"/><text x="639.5" y="514.5" text-anchor="end" font-size="13" font-weight="normal" textLength="26.3" lengthAdjust="spacingAndGlyphs" stroke="#000" stroke-width="0.250" >−90.0</text><text x="648" y="527" text-anchor="middle" font-size="13" font-weight="normal" textLength="14.5" lengthAdjust="spacingAndGlyphs" stroke="#000" stroke-width="0.250" >0.0</text><text x="720" y="527" text-anchor="middle" font-size="13" font-weight="normal" textLength="31.8" lengthAdjust="spacingAndGlyphs" stroke="#000" stroke-width="0.250" >1000.0</text><text x="792" y="527" text-anchor="middle" font-size="13" font-weight="normal" textLength="31.8" lengthAdjust="spacingAndGlyphs" stroke="#000" stroke-width="0.250" >2000.0</text><text x="864.5" y="527" text-anchor="middle" font-size="13" font-weight="normal" textLength="31.8" lengthAdjust="spacingAndGlyphs" stroke="#000" stroke-width="0.250" >3000.0</text><text x="954" y="527" text-anchor="end" font-size="13" font-weight="normal" textLength="31.8" lengthAdjust="spacingAndGlyphs" stroke="#000" stroke-width="0.250" >4023.2</text><path d="M648.0 408.0 L649.9 371.5 L652.4 327.0 L653.6 337.0 L656.8 417.7 L658.9 375.9 L661.6 326.0 L662.8 336.0 L666.0 432.0 L667.6 382.0 L669.7 324.0 L670.9 334.0 L674.0 432.0 L675.7 388.5 L678.0 337.0 L679.2 347.0 L683.0 458.0 L684.9 402.5 L687.3 339.0 L688.5 349.0 L691.7 480.0 L693.6 420.8 L696.0 353.5 L697.2 363.5 L700.8 467.0 L702.4 418.9 L704.5 362.7 L705.7 372.7 L709.0 482.0 L710.7 436.5 L713.0 383.0 L714.2 393.0 L718.0 478.0 L719.6 440.9 L721.7 395.7 L722.9 405.7 L726.5 474.5 L728.2 446.2 L730.5 410.0 L731.7 420.0 L735.0 482.0 L736.9 454.8 L739.3 419.5 L740.5 429.5 L743.7 461.7 L745.5 436.4 L747.8 403.0 L749.0 413.0 L752.0 478.0 L754.2 449.0 L757.0 412.0 L758.2 422.0 L761.3 461.7 L763.2 447.4 L765.7 425.0 L766.9 435.0 L770.5 482.0 L772.0 466.5 L774.0 443.0 L775.2 453.0 L778.3 476.3 L782.0 467.2 L785.7 474.5 L790.1 460.9 L794.8 485.5 L800.3 480.0 L804.0 487.4 L806.6 511.2 L809.5 472.7 L813.2 491.0 L818.7 487.4 L822.3 489.2 L826.0 469.0 L829.7 498.4 L833.3 467.2 L837.7 489.2 L842.5 467.2 L846.2 476.3 L849.8 464.6 L854.6 478.2 L859.7 459.8 L864.5 505.7 L868.9 470.8 L874.4 494.7 L879.2 463.5 L884.7 487.4 L887.6 469.0 L892.0 463.5 L896.4 485.5 L903.0 465.3 L906.7 483.7 L910.3 474.5 L913.3 487.4 L915.8 507.5 L918.4 491.0 L919.9 509.4 L923.2 487.4 L925.7 494.7 L928.0 481.9 L932.4 496.5 L936.0 494.7 L938.6 478.2" fill="none" stroke="#1440b8" stroke-width="1.100" stroke-linejoin="round" clip-path="url(#c4)"/></svg>
<svg class="a" style="left:0;top:0" width="1024" height="600" font-family='"Liberation Sans",sans-serif' letter-spacing="-0.3"><rect x="287.5" y="537.5" width="49" height="18" fill="#fff" stroke="#000" stroke-width="1"/><path d="M288 555h48v-17" stroke="#808080" fill="none"/><text x="289" y="546" font-size="8" font-weight="bold">I</text><text x="292" y="554" font-size="8">0</text><path d="M290 552l6-12" stroke="#000" stroke-width="1"/><path d="M298.5 553V539.5h18" stroke="#b0b0b0" fill="none"/><text x="303" y="551" font-size="12" font-weight="bold">v</text><rect x="320" y="539" width="14" height="14" fill="#b4b0a8"/><path d="M320 553.5h14.500v-14.500" stroke="#505050" fill="none"/><path d="M320.5 553v-13.500h13" stroke="#e8e8e8" fill="none"/><path d="M324 545h6l-3 3.500z" fill="#000"/><rect x="346" y="538" width="6" height="17" fill="#b8b4ac"/><path d="M346 546.5h6" stroke="#fff" stroke-width="1"/><path d="M349 539.5l2.6 4h-5.200zM349 553.5l2.6-4h-5.200z" fill="#000"/><path d="M346.5 544.5h5M346.5 548.5h5" stroke="#000" stroke-width="1"/><rect x="353.5" y="538.5" width="33" height="15" fill="#fff" stroke="#404040"/><text x="356" y="551" font-size="12.5" font-weight="bold">Hann</text><rect x="397" y="538" width="6" height="17" fill="#b8b4ac"/><path d="M397 546.5h6" stroke="#fff" stroke-width="1"/><path d="M400 539.5l2.6 4h-5.200zM400 553.5l2.6-4h-5.200z" fill="#000"/><path d="M397.5 544.5h5M397.5 548.5h5" stroke="#000" stroke-width="1"/><path d="M405 538.5h56" stroke="#c8c8c8"/><text x="406" y="551" font-size="12.5" font-weight="bold">205000.0</text><text x="467" y="551" font-size="12.500" font-weight="bold">Hz</text><rect x="488" y="538" width="6" height="17" fill="#b8b4ac"/><path d="M488 546.5h6" stroke="#fff" stroke-width="1"/><path d="M491 539.5l2.6 4h-5.200zM491 553.5l2.6-4h-5.200z" fill="#000"/><path d="M488.5 544.5h5M488.5 548.5h5" stroke="#000" stroke-width="1"/><rect x="496.500" y="538.500" width="42" height="15" fill="#fff" stroke="#404040"/><text x="536" y="551" font-size="12.500" font-weight="bold" text-anchor="end">7000</text><text x="541" y="550" font-size="12.500" font-weight="bold">word</text><rect x="654.5" y="537.5" width="49" height="18" fill="#fff" stroke="#000" stroke-width="1"/><path d="M655 555h48v-17" stroke="#808080" fill="none"/><text x="656" y="546" font-size="8" font-weight="bold">I</text><text x="659" y="554" font-size="8">0</text><path d="M657 552l6-12" stroke="#000" stroke-width="1"/><path d="M665.5 553V539.5h18" stroke="#b0b0b0" fill="none"/><text x="670" y="551" font-size="12" font-weight="bold">i</text><rect x="687" y="539" width="14" height="14" fill="#b4b0a8"/><path d="M687 553.5h14.500v-14.500" stroke="#505050" fill="none"/><path d="M687.5 553v-13.500h13" stroke="#e8e8e8" fill="none"/><path d="M691 545h6l-3 3.500z" fill="#000"/><rect x="713" y="538" width="6" height="17" fill="#b8b4ac"/><path d="M713 546.5h6" stroke="#fff" stroke-width="1"/><path d="M716 539.5l2.6 4h-5.200zM716 553.5l2.6-4h-5.200z" fill="#000"/><path d="M713.5 544.5h5M713.5 548.5h5" stroke="#000" stroke-width="1"/><rect x="720.5" y="538.5" width="33" height="15" fill="#fff" stroke="#404040"/><text x="723" y="551" font-size="12.5" font-weight="bold">Hann</text><rect x="764" y="538" width="6" height="17" fill="#b8b4ac"/><path d="M764 546.5h6" stroke="#fff" stroke-width="1"/><path d="M767 539.5l2.6 4h-5.200zM767 553.5l2.6-4h-5.200z" fill="#000"/><path d="M764.5 544.5h5M764.5 548.5h5" stroke="#000" stroke-width="1"/><path d="M772 538.5h56" stroke="#c8c8c8"/><text x="773" y="551" font-size="12.5" font-weight="bold">8100.0</text><text x="834" y="551" font-size="12.500" font-weight="bold">Hz</text><rect x="855" y="538" width="6" height="17" fill="#b8b4ac"/><path d="M855 546.5h6" stroke="#fff" stroke-width="1"/><path d="M858 539.5l2.6 4h-5.200zM858 553.5l2.6-4h-5.200z" fill="#000"/><path d="M855.5 544.5h5M855.5 548.5h5" stroke="#000" stroke-width="1"/><rect x="863.500" y="538.500" width="42" height="15" fill="#fff" stroke="#404040"/><text x="903" y="551" font-size="12.500" font-weight="bold" text-anchor="end">300</text><text x="908" y="550" font-size="12.500" font-weight="bold">word</text></svg>
</body></html>
